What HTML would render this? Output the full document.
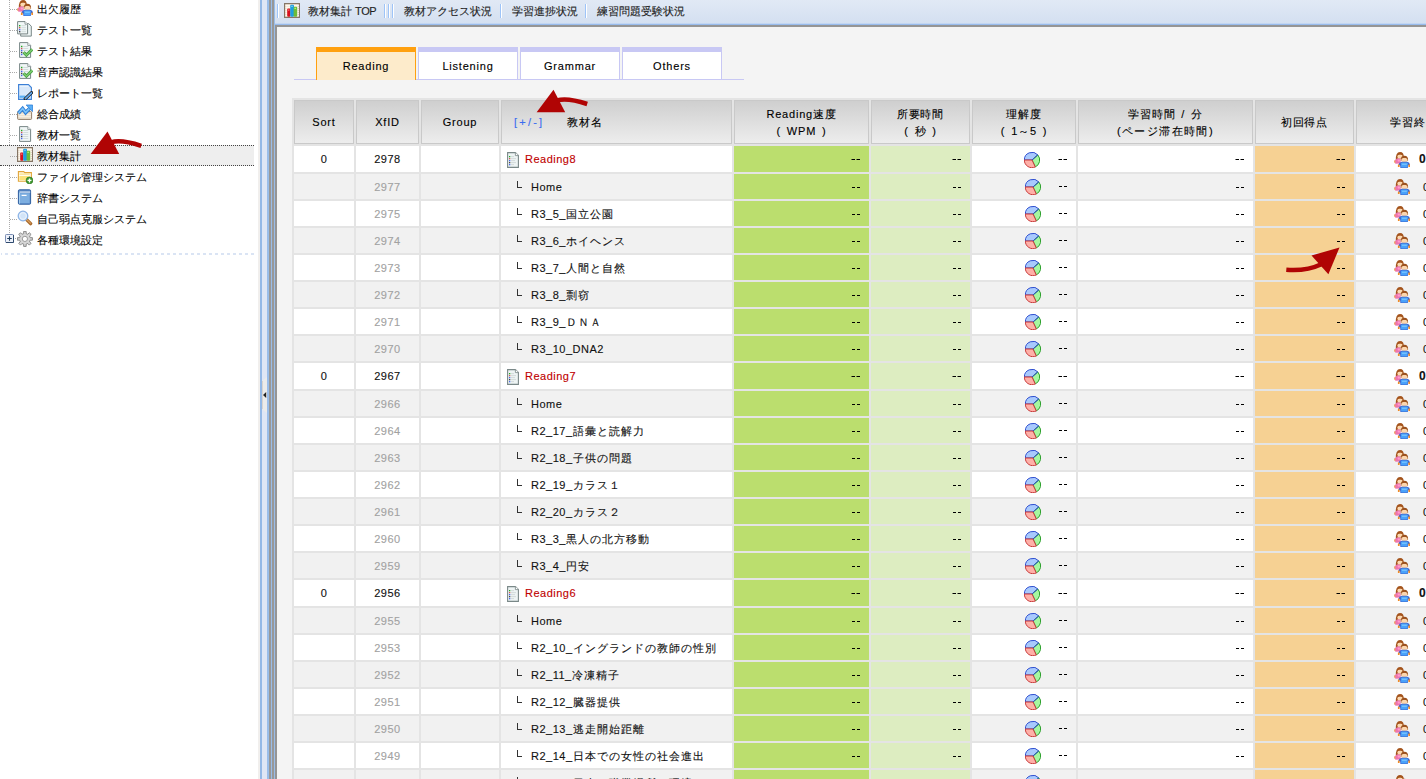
<!DOCTYPE html>
<html><head><meta charset="utf-8">
<style>
html,body{margin:0;padding:0}
body{width:1426px;height:779px;overflow:hidden;position:relative;background:#fff;font-family:"Liberation Sans",sans-serif;font-size:12px;color:#111;-webkit-text-stroke:0.12px}
svg{display:block}
.abs{position:absolute}
.c{position:absolute}
.t{position:absolute;height:14px;line-height:14px;white-space:nowrap;color:#111;font-size:11px;letter-spacing:.5px}
.t.gr{color:#a2a2a2}
.t.red{color:#c00000}
.j{letter-spacing:1px}
.d{position:absolute;width:3px;height:1px;background:#000}
.t.b{font-weight:bold;font-size:12px;letter-spacing:0}
.ell{position:absolute;width:4px;height:6px;border-left:1px solid #333;border-bottom:1px solid #333}
.i{position:absolute;width:16px;height:16px;line-height:0}
.hdot{position:absolute;left:10px;width:7px;height:1px;background:repeating-linear-gradient(90deg,#aaa 0 1px,transparent 1px 2px)}
.st{position:absolute;left:37px;height:16px;line-height:16px;font-size:11px;white-space:nowrap;color:#000}
.sel{position:absolute;left:0;width:254px;height:19px;border-top:1px dotted #444;border-bottom:1px dotted #444;background:#eee}
.hc{position:absolute;top:100px;height:42px;border:1px solid #c9c9c9;background:linear-gradient(#cfcfcf,#ededed);text-align:center;color:#000;font-size:11px;letter-spacing:.8px}
.hc span{display:block;line-height:17px}
.tab{position:absolute;top:47px;width:98px;height:27px;border:1px solid #c8c8f4;border-top:5px solid #c8c8f4;background:#fff;text-align:center;line-height:28px;font-size:11px;color:#000;letter-spacing:.8px}
.tab.on{border-color:#ffa00f;border-bottom:none;height:28px;background:#fdebcb}
.sep{position:absolute;top:4px;width:1px;height:14px;background:#9ec4f8;border-right:1px solid #fff}
</style></head><body>
<!-- sidebar -->
<div class="abs" style="left:9px;top:0;width:1px;height:233px;background:repeating-linear-gradient(180deg,#aaa 0 1px,transparent 1px 2px)"></div>
<div class="hdot" style="top:9px"></div>
<div class="i" style="left:17px;top:0px"><svg width="16" height="16" viewBox="0 0 16 16"><path d="M1.8 8.6 Q1.4 0 6 0 Q10.2 0 9.8 5.6 L8.6 6.4 L3.6 6.6 L3.4 8.8 Z" fill="#a4541c"/><ellipse cx="6.1" cy="4.5" rx="2.7" ry="2.1" fill="#fcd9b0"/><path d="M3.4 3.2 Q6 1.2 8.8 3.4 Q8.6 1.2 6 1.1 Q3.6 1.2 3.4 3.2Z" fill="#a4541c"/><path d="M0.4 8.8 L3 6.5 L6.4 6.6 L6.8 11.6 L1.4 11.8 Z" fill="#ee74b0"/><path d="M3.6 7.4 L5.8 7.4 L6 9.6 L3.8 9.4Z" fill="#ff9ccc"/><path d="M0 8.6 L1.4 8.4 L1.6 10.8 L0.2 10.8Z" fill="#eea060"/><path d="M6.7 8.8 Q6.4 3.8 10.4 3.8 Q14.4 3.8 14.1 8.8 Z" fill="#9c521e"/><ellipse cx="10.4" cy="8.1" rx="3.1" ry="2.4" fill="#fcd6ad"/><path d="M7.3 6.8 Q10.4 4.6 13.5 6.8 Q13 4.6 10.4 4.5 Q7.8 4.6 7.3 6.8Z" fill="#9c521e"/><path d="M4.3 13 L5.6 10.8 L7.6 9.8 L13.2 9.8 L15.2 10.8 L16 13 L14 13.4 L13.8 16 L6.4 16 L6.2 13.4 Z" fill="#3c64cc"/><path d="M6.8 11 L8.2 10.4 L12.6 10.4 L14 11 L13.4 15.4 L7.2 15.4 Z" fill="#4aa2fa"/><path d="M8 11.6 H12.8 V13 H8Z" fill="#7cc8ff" opacity=".8"/><path d="M3.9 12.6 H5.6 V15 H3.9Z" fill="#f08a24"/><path d="M14.4 12.6 H16 V15 H14.4Z" fill="#f08a24"/></svg></div>
<div class="st" style="top:1px">出欠履歴</div>
<div class="hdot" style="top:30px"></div>
<div class="i" style="left:17px;top:21px"><svg width="16" height="16" viewBox="0 0 16 16"><path d="M3.7 2.6 H11.700000000000001 L14.3 5.2 V15.1 H3.7 Z" fill="#eef5f5" stroke="#788686" stroke-width="1"/><path d="M0.6 0.6 H8.0 L10.6 3.2 V12.9 H0.6 Z" fill="#f2f8f8" stroke="#788686" stroke-width="1"/><path d="M8 0.6 V3.2 H10.6" fill="#fff" stroke="#788686" stroke-width="0.8"/><rect x="2" y="4" width="1.4" height="1.4" fill="#2a2"/><rect x="4.4" y="4.2" width="4.5" height="1" fill="#d2dcdc"/><rect x="2" y="6" width="1.4" height="1.4" fill="#c55"/><rect x="4.4" y="6.2" width="4.5" height="1" fill="#d2dcdc"/><rect x="2" y="8" width="1.4" height="1.4" fill="#46e"/><rect x="4.4" y="8.2" width="4.5" height="1" fill="#d2dcdc"/><rect x="2" y="10" width="1.4" height="1.4" fill="#444"/><rect x="4.4" y="10.2" width="4.5" height="1" fill="#d2dcdc"/></svg></div>
<div class="st" style="top:22px">テスト一覧</div>
<div class="hdot" style="top:51px"></div>
<div class="i" style="left:17px;top:42px"><svg width="16" height="16" viewBox="0 0 16 16"><path d="M2.6 0.6 H10.8 L13.6 3.4 V15.4 H2.6 Z" fill="#f0f6f6" stroke="#788686" stroke-width="1"/><path d="M10.8 0.6 V3.4 H13.6" fill="#fff" stroke="#788686" stroke-width="0.8"/><rect x="4" y="3.8" width="1.4" height="1.4" fill="#2a2"/><rect x="6.2" y="4.0" width="5" height="1" fill="#d2dcdc"/><rect x="4" y="5.8" width="1.4" height="1.4" fill="#c55"/><rect x="6.2" y="6.0" width="5" height="1" fill="#d2dcdc"/><rect x="4" y="7.8" width="1.4" height="1.4" fill="#46e"/><rect x="6.2" y="8.0" width="5" height="1" fill="#d2dcdc"/><rect x="4" y="9.8" width="1.4" height="1.4" fill="#444"/><rect x="6.2" y="10.0" width="5" height="1" fill="#d2dcdc"/><rect x="4" y="11.8" width="1.4" height="1.4" fill="#46e"/><rect x="6.2" y="12.0" width="5" height="1" fill="#d2dcdc"/><path d="M6.6 10.2 L9.4 13.2 L15.2 7.4" fill="none" stroke="#3f9a3f" stroke-width="3" stroke-linejoin="miter"/><path d="M6.6 10.2 L9.4 13.2 L15.2 7.4" fill="none" stroke="#7ccc6c" stroke-width="1.6"/></svg></div>
<div class="st" style="top:43px">テスト結果</div>
<div class="hdot" style="top:72px"></div>
<div class="i" style="left:17px;top:63px"><svg width="16" height="16" viewBox="0 0 16 16"><path d="M2.6 0.6 H10.8 L13.6 3.4 V15.4 H2.6 Z" fill="#f0f6f6" stroke="#788686" stroke-width="1"/><path d="M10.8 0.6 V3.4 H13.6" fill="#fff" stroke="#788686" stroke-width="0.8"/><rect x="4" y="3.8" width="1.4" height="1.4" fill="#2a2"/><rect x="6.2" y="4.0" width="5" height="1" fill="#d2dcdc"/><rect x="4" y="5.8" width="1.4" height="1.4" fill="#c55"/><rect x="6.2" y="6.0" width="5" height="1" fill="#d2dcdc"/><rect x="4" y="7.8" width="1.4" height="1.4" fill="#46e"/><rect x="6.2" y="8.0" width="5" height="1" fill="#d2dcdc"/><rect x="4" y="9.8" width="1.4" height="1.4" fill="#444"/><rect x="6.2" y="10.0" width="5" height="1" fill="#d2dcdc"/><rect x="4" y="11.8" width="1.4" height="1.4" fill="#46e"/><rect x="6.2" y="12.0" width="5" height="1" fill="#d2dcdc"/><path d="M6.6 10.2 L9.4 13.2 L15.2 7.4" fill="none" stroke="#3f9a3f" stroke-width="3" stroke-linejoin="miter"/><path d="M6.6 10.2 L9.4 13.2 L15.2 7.4" fill="none" stroke="#7ccc6c" stroke-width="1.6"/></svg></div>
<div class="st" style="top:64px">音声認識結果</div>
<div class="hdot" style="top:93px"></div>
<div class="i" style="left:17px;top:84px"><svg width="16" height="16" viewBox="0 0 16 16"><path d="M1.6 0.6 H11.4 L14.4 3.6 V15.4 H1.6 Z" fill="#d8e8fa" stroke="#3b7fd6" stroke-width="1.1"/><rect x="2.6" y="1.6" width="9" height="1" fill="#fff" opacity=".7"/><rect x="2.4" y="11.6" width="6" height="2.2" fill="#58aef5"/><path d="M8.2 14.8 L14.6 8.6" stroke="#222" stroke-width="3.2" stroke-linecap="round"/><path d="M8.4 14.6 L14.4 8.8" stroke="#60a8f0" stroke-width="1.6" stroke-linecap="round"/></svg></div>
<div class="st" style="top:85px">レポート一覧</div>
<div class="hdot" style="top:114px"></div>
<div class="i" style="left:17px;top:104px"><svg width="16" height="16" viewBox="0 0 16 16"><rect x="0.6" y="7.6" width="14" height="7.8" rx="0.8" fill="#ede2cf" stroke="#907c68" stroke-width="1"/><path d="M1.5 10.5H14M1.5 12.5H14" stroke="#f8f2e8" stroke-width="0.8"/><path d="M1.4 9.2 L5.6 4.6 L8.6 8.6 L12.6 4.4" fill="none" stroke="#2e7fd8" stroke-width="3.6" stroke-linejoin="miter"/><path d="M1.6 9 L5.6 4.6 L8.6 8.6 L12.6 4.4" fill="none" stroke="#7cc4fa" stroke-width="1.6"/><path d="M9.2 1 H15.6 V7.6 Z" fill="#5ab0f6" stroke="#2e7fd8" stroke-width="0.8"/></svg></div>
<div class="st" style="top:106px">総合成績</div>
<div class="hdot" style="top:135px"></div>
<div class="i" style="left:17px;top:126px"><svg width="16" height="16" viewBox="0 0 16 16"><path d="M2.6 0.6 H10.8 L13.6 3.4 V15.4 H2.6 Z" fill="#f0f6f6" stroke="#788686" stroke-width="1"/><path d="M10.8 0.6 V3.4 H13.6" fill="#fff" stroke="#788686" stroke-width="0.8"/><rect x="4" y="3.8" width="1.4" height="1.4" fill="#2a2"/><rect x="6.2" y="4.0" width="5" height="1" fill="#d2dcdc"/><rect x="4" y="5.8" width="1.4" height="1.4" fill="#c55"/><rect x="6.2" y="6.0" width="5" height="1" fill="#d2dcdc"/><rect x="4" y="7.8" width="1.4" height="1.4" fill="#46e"/><rect x="6.2" y="8.0" width="5" height="1" fill="#d2dcdc"/><rect x="4" y="9.8" width="1.4" height="1.4" fill="#444"/><rect x="6.2" y="10.0" width="5" height="1" fill="#d2dcdc"/><rect x="4" y="11.8" width="1.4" height="1.4" fill="#46e"/><rect x="6.2" y="12.0" width="5" height="1" fill="#d2dcdc"/></svg></div>
<div class="st" style="top:127px">教材一覧</div>
<div class="sel" style="top:145px"></div>
<div class="hdot" style="top:156px"></div>
<div class="i" style="left:17px;top:147px"><svg width="16" height="16" viewBox="0 0 16 16"><rect x="0.6" y="0.6" width="14.8" height="13.8" fill="#f6ecda" stroke="#857666" stroke-width="1.2"/><path d="M1.5 2.5H15M1.5 4.5H15M1.5 6.5H15M1.5 8.5H15M1.5 10.5H15M1.5 12.5H15" stroke="#fffaf2" stroke-width="0.8"/><rect x="3.2" y="5.6" width="3.2" height="8.2" rx="1" fill="#d8101e"/><rect x="6.2" y="1.8" width="3.8" height="12" rx="1" fill="#1e9ee0"/><rect x="9.6" y="3.8" width="3.6" height="10" rx="1" fill="#6cbc3a"/><rect x="4" y="6.6" width="1.4" height="1" fill="#f88"/><rect x="7.2" y="2.8" width="1.6" height="1" fill="#8de"/><rect x="10.4" y="4.8" width="1.6" height="1" fill="#bf8"/></svg></div>
<div class="st" style="top:148px">教材集計</div>
<div class="hdot" style="top:177px"></div>
<div class="i" style="left:17px;top:168px"><svg width="16" height="16" viewBox="0 0 16 16"><path d="M1.4 3.6 H6.8 L7.6 4.6 H14.4 V13.2 H1.4 Z" fill="#fffbea" stroke="#e2a63a" stroke-width="1.1"/><path d="M2.4 5.6 H12.8 V6.6 H2.4 Z" fill="#f8d870"/><path d="M2.4 8 H12.6 V12.2 H2.4 Z" fill="#fbe27a"/><circle cx="12.5" cy="12.4" r="3.4" fill="#3e9a2e" stroke="#2a6e1e" stroke-width="0.6"/><path d="M12.5 10.4 V14.4 M10.5 12.4 H14.5" stroke="#fff" stroke-width="1.4"/></svg></div>
<div class="st" style="top:169px">ファイル管理システム</div>
<div class="hdot" style="top:198px"></div>
<div class="i" style="left:17px;top:189px"><svg width="16" height="16" viewBox="0 0 16 16"><rect x="1.4" y="0.8" width="12.2" height="14.4" rx="1" fill="#5e8fcc" stroke="#2f5fa0" stroke-width="1"/><rect x="2.6" y="2.6" width="10.6" height="0.9" fill="#fff"/><rect x="3" y="4.2" width="9.6" height="10" fill="#7daee0"/><rect x="4.6" y="5.8" width="5" height="1.2" fill="#fff"/><rect x="2" y="3.6" width="1" height="11" fill="#a8d0f0"/></svg></div>
<div class="st" style="top:190px">辞書システム</div>
<div class="hdot" style="top:219px"></div>
<div class="i" style="left:17px;top:210px"><svg width="16" height="16" viewBox="0 0 16 16"><path d="M9.6 9.6 L13.6 13.6" stroke="#a86a2c" stroke-width="3.4" stroke-linecap="round"/><path d="M9.8 9.6 L13.4 13.2" stroke="#dca060" stroke-width="1.2" stroke-linecap="round"/><circle cx="6" cy="6" r="4.8" fill="#d2e4f8" stroke="#8db4e6" stroke-width="1.3"/><circle cx="6" cy="6" r="3.4" fill="none" stroke="#eef5fd" stroke-width="0.9"/></svg></div>
<div class="st" style="top:211px">自己弱点克服システム</div>
<div class="abs" style="left:15px;top:238px;width:1px;height:1px;background:#aaa"></div>
<div class="i" style="left:5px;top:234px;width:9px;height:9px"><svg width="9" height="9" viewBox="0 0 9 9"><rect x="0.5" y="0.5" width="8" height="8" rx="0.8" fill="#eef2fb" stroke="#7c8fb4" stroke-width="1"/><path d="M8.5 1 V8.5 H1" fill="none" stroke="#2f4a6e" stroke-width="1"/><path d="M4.5 2.2 V6.8 M2.2 4.5 H6.8" stroke="#23405e" stroke-width="1.1"/></svg></div>
<div class="i" style="left:17px;top:231px"><svg width="16" height="16" viewBox="0 0 16 16"><path d="M13.17 6.72 L15.39 6.61 L15.39 9.19 L13.17 9.08 L12.89 9.97 L12.46 10.79 L14.11 12.29 L12.29 14.11 L10.79 12.46 L9.97 12.89 L9.08 13.17 L9.19 15.39 L6.61 15.39 L6.72 13.17 L5.83 12.89 L5.01 12.46 L3.51 14.11 L1.69 12.29 L3.34 10.79 L2.91 9.97 L2.63 9.08 L0.41 9.19 L0.41 6.61 L2.63 6.72 L2.91 5.83 L3.34 5.01 L1.69 3.51 L3.51 1.69 L5.01 3.34 L5.83 2.91 L6.72 2.63 L6.61 0.41 L9.19 0.41 L9.08 2.63 L9.97 2.91 L10.79 3.34 L12.29 1.69 L14.11 3.51 L12.46 5.01 L12.89 5.83Z" fill="#d6d6d6" stroke="#8a8a8a" stroke-width="1"/><circle cx="7.9" cy="7.9" r="2.6" fill="#fff" stroke="#9a9a9a" stroke-width="1"/></svg></div>
<div class="st" style="top:232px">各種環境設定</div>
<div class="abs" style="left:1px;top:253px;width:253px;height:2px;background:linear-gradient(90deg,#dae4f4 50%,transparent 50%) 4px 0/6px 2px repeat-x"></div>
<!-- splitter -->
<div class="abs" style="left:258px;top:0;width:2px;height:779px;background:#f1efed"></div>
<div class="abs" style="left:260px;top:0;width:2px;height:779px;background:#94b8e6"></div>
<div class="abs" style="left:262px;top:0;width:5px;height:779px;background:#dfe6f5"></div>
<div class="abs" style="left:267px;top:0;width:2px;height:779px;background:#9abde9"></div>
<div class="abs" style="left:269px;top:0;width:2px;height:779px;background:#989898"></div>
<div class="abs" style="left:271px;top:0;width:1px;height:779px;background:#9abde9"></div>
<div class="abs" style="left:272px;top:0;width:2px;height:779px;background:#989898"></div>
<div class="abs" style="left:274px;top:0;width:1px;height:779px;background:#9abde9"></div>
<svg class="abs" style="left:262px;top:377px" width="5" height="36" viewBox="0 0 5 36"><path d="M0 4 L5 0 V36 L0 32 Z" fill="#ebebeb"/><path d="M0.5 4 V32" stroke="#d8d4d0" stroke-width="1"/><path d="M1 18 L4.2 15 V21 Z" fill="#222"/></svg>
<!-- toolbar -->
<div class="abs" style="left:275px;top:0;width:1151px;height:23px;background:linear-gradient(#e1e9f5,#d4e0f1)"></div>
<div class="abs" style="left:275px;top:23px;width:1151px;height:1px;background:#c2d6f2"></div><div class="abs" style="left:275px;top:24px;width:1151px;height:1px;background:#98bbec"></div>
<div class="abs" style="left:275px;top:25px;width:1151px;height:2px;background:#959595"></div>
<div class="abs" style="left:275px;top:27px;width:2px;height:752px;background:#959595"></div>
<div class="abs" style="left:277px;top:27px;width:1149px;height:752px;background:#f4f4f4"></div>
<div class="sep" style="left:277px"></div>
<div class="i" style="left:284px;top:3px"><svg width="16" height="16" viewBox="0 0 16 16"><rect x="0.6" y="0.6" width="14.8" height="13.8" fill="#f6ecda" stroke="#857666" stroke-width="1.2"/><path d="M1.5 2.5H15M1.5 4.5H15M1.5 6.5H15M1.5 8.5H15M1.5 10.5H15M1.5 12.5H15" stroke="#fffaf2" stroke-width="0.8"/><rect x="3.2" y="5.6" width="3.2" height="8.2" rx="1" fill="#d8101e"/><rect x="6.2" y="1.8" width="3.8" height="12" rx="1" fill="#1e9ee0"/><rect x="9.6" y="3.8" width="3.6" height="10" rx="1" fill="#6cbc3a"/><rect x="4" y="6.6" width="1.4" height="1" fill="#f88"/><rect x="7.2" y="2.8" width="1.6" height="1" fill="#8de"/><rect x="10.4" y="4.8" width="1.6" height="1" fill="#bf8"/></svg></div>
<div style="position:absolute;top:3px;height:16px;line-height:16px;font-size:11px;white-space:nowrap;color:#222;left:308px">教材集計 <span style="letter-spacing:-.4px">TOP</span></div>
<div class="sep" style="left:384px"></div>
<div class="sep" style="left:388px"></div>
<div class="sep" style="left:392px"></div>
<div style="position:absolute;top:3px;height:16px;line-height:16px;font-size:11px;white-space:nowrap;color:#222;left:404px">教材アクセス状況</div>
<div class="sep" style="left:500px"></div>
<div style="position:absolute;top:3px;height:16px;line-height:16px;font-size:11px;white-space:nowrap;color:#222;left:512px">学習進捗状況</div>
<div class="sep" style="left:585px"></div>
<div style="position:absolute;top:3px;height:16px;line-height:16px;font-size:11px;white-space:nowrap;color:#222;left:597px">練習問題受験状況</div>
<!-- tabs -->
<div class="abs" style="left:294px;top:79px;width:450px;height:1px;background:#c8c8f4"></div>
<div class="tab on" style="left:316px">Reading</div>
<div class="tab" style="left:418px">Listening</div>
<div class="tab" style="left:520px">Grammar</div>
<div class="tab" style="left:622px">Others</div>
<!-- table -->
<div class="abs" style="left:292px;top:98px;width:1134px;height:681px;background:#e4e4e4"></div>
<div class="hc" style="left:294px;width:58px;line-height:42px">Sort</div>
<div class="hc" style="left:356px;width:61px;line-height:42px">XfID</div>
<div class="hc" style="left:421px;width:76px;line-height:42px">Group</div>
<div class="hc" style="left:501px;width:229px;line-height:42px;text-align:left"><span style="display:inline;color:#3a6cf0;margin-left:12px;letter-spacing:2.2px">[+/-]</span><span style="display:inline;margin-left:23px">教材名</span></div>
<div class="hc" style="left:734px;width:133px"><span style="margin-top:5px">Reading速度</span><span style="word-spacing:2px">( WPM )</span></div>
<div class="hc" style="left:871px;width:97px"><span style="margin-top:5px">所要時間</span><span style="word-spacing:2px">( 秒 )</span></div>
<div class="hc" style="left:972px;width:102px"><span style="margin-top:5px">理解度</span><span style="word-spacing:2px">( 1～5 )</span></div>
<div class="hc" style="left:1078px;width:173px"><span style="margin-top:5px;word-spacing:2px">学習時間 / 分</span><span style="letter-spacing:1.4px">(ページ滞在時間)</span></div>
<div class="hc" style="left:1255px;width:97px;line-height:42px">初回得点</div>
<div class="hc" style="left:1356px;width:114px;line-height:42px">学習終了</div>
<div class="c" style="left:294px;top:146px;width:60px;height:26px;background:#fff"></div>
<div class="c" style="left:356px;top:146px;width:63px;height:26px;background:#fff"></div>
<div class="c" style="left:421px;top:146px;width:78px;height:26px;background:#fff"></div>
<div class="c" style="left:501px;top:146px;width:231px;height:26px;background:#fff"></div>
<div class="c" style="left:734px;top:146px;width:135px;height:26px;background:#bbde6e"></div>
<div class="c" style="left:871px;top:146px;width:99px;height:26px;background:#ddedc1"></div>
<div class="c" style="left:972px;top:146px;width:104px;height:26px;background:#fff"></div>
<div class="c" style="left:1078px;top:146px;width:175px;height:26px;background:#fff"></div>
<div class="c" style="left:1255px;top:146px;width:99px;height:26px;background:#f6d193"></div>
<div class="c" style="left:1356px;top:146px;width:120px;height:26px;background:#fff"></div>
<div class="t " style="left:294px;top:152px;width:60px;text-align:center">0</div>
<div class="t " style="left:356px;top:152px;width:63px;text-align:center">2978</div>
<div class="i" style="left:507px;top:152px;width:12px"><svg width="12" height="16" viewBox="0 0 12 16"><path d="M0.6 0.6 H8.4 L11.4 3.6 V15.4 H0.6 Z" fill="#eef4f4" stroke="#7a8888" stroke-width="1.1"/><path d="M8.4 0.6 V3.6 H11.4" fill="#fff" stroke="#7a8888" stroke-width="0.8"/><rect x="2" y="4" width="1.3" height="1.3" fill="#2a2"/><rect x="2" y="6" width="1.3" height="1.3" fill="#c55"/><rect x="2" y="8" width="1.3" height="1.3" fill="#46e"/><rect x="2" y="10" width="1.3" height="1.3" fill="#444"/><rect x="2" y="12" width="1.3" height="1.3" fill="#46e"/><path d="M4 4.6H7M4 6.6H9M4 8.6H8M4 10.6H9M4 12.6H7" stroke="#d0d8d8" stroke-width="0.9"/></svg></div>
<div class="t red" style="left:525px;top:152px">Reading8</div>
<div class="d" style="left:852px;top:159px"></div><div class="d" style="left:851px;top:159px;width:1px;opacity:.5"></div><div class="d" style="left:857px;top:159px"></div><div class="d" style="left:856px;top:159px;width:1px;opacity:.5"></div>
<div class="d" style="left:953px;top:159px"></div><div class="d" style="left:952px;top:159px;width:1px;opacity:.5"></div><div class="d" style="left:958px;top:159px"></div><div class="d" style="left:957px;top:159px;width:1px;opacity:.5"></div>
<div class="i" style="left:1024px;top:152px"><svg width="16" height="16" viewBox="0 0 16 16"><path d="M8 8 L0.3 8 A7.7 7.7 0 0 1 13.83 2.97 Z" fill="#a8c9fd" stroke="#2f4fd0" stroke-width="1"/><path d="M8 8 L13.83 2.97 A7.7 7.7 0 0 1 11.31 14.95 Z" fill="#a6f7a0" stroke="#2ea02e" stroke-width="1"/><path d="M8 8 L11.31 14.95 A7.7 7.7 0 0 1 0.3 8 Z" fill="#feb0a8" stroke="#c83a3a" stroke-width="1"/><path d="M8 8 L13.83 2.97" stroke="#2f4fd0" stroke-width="1"/></svg></div>
<div class="d" style="left:1059px;top:159px"></div><div class="d" style="left:1058px;top:159px;width:1px;opacity:.5"></div><div class="d" style="left:1064px;top:159px"></div><div class="d" style="left:1063px;top:159px;width:1px;opacity:.5"></div>
<div class="d" style="left:1236px;top:159px"></div><div class="d" style="left:1235px;top:159px;width:1px;opacity:.5"></div><div class="d" style="left:1241px;top:159px"></div><div class="d" style="left:1240px;top:159px;width:1px;opacity:.5"></div>
<div class="d" style="left:1337px;top:159px"></div><div class="d" style="left:1336px;top:159px;width:1px;opacity:.5"></div><div class="d" style="left:1342px;top:159px"></div><div class="d" style="left:1341px;top:159px;width:1px;opacity:.5"></div>
<div class="i" style="left:1394px;top:152px"><svg width="16" height="16" viewBox="0 0 16 16"><path d="M1.8 8.6 Q1.4 0 6 0 Q10.2 0 9.8 5.6 L8.6 6.4 L3.6 6.6 L3.4 8.8 Z" fill="#a4541c"/><ellipse cx="6.1" cy="4.5" rx="2.7" ry="2.1" fill="#fcd9b0"/><path d="M3.4 3.2 Q6 1.2 8.8 3.4 Q8.6 1.2 6 1.1 Q3.6 1.2 3.4 3.2Z" fill="#a4541c"/><path d="M0.4 8.8 L3 6.5 L6.4 6.6 L6.8 11.6 L1.4 11.8 Z" fill="#ee74b0"/><path d="M3.6 7.4 L5.8 7.4 L6 9.6 L3.8 9.4Z" fill="#ff9ccc"/><path d="M0 8.6 L1.4 8.4 L1.6 10.8 L0.2 10.8Z" fill="#eea060"/><path d="M6.7 8.8 Q6.4 3.8 10.4 3.8 Q14.4 3.8 14.1 8.8 Z" fill="#9c521e"/><ellipse cx="10.4" cy="8.1" rx="3.1" ry="2.4" fill="#fcd6ad"/><path d="M7.3 6.8 Q10.4 4.6 13.5 6.8 Q13 4.6 10.4 4.5 Q7.8 4.6 7.3 6.8Z" fill="#9c521e"/><path d="M4.3 13 L5.6 10.8 L7.6 9.8 L13.2 9.8 L15.2 10.8 L16 13 L14 13.4 L13.8 16 L6.4 16 L6.2 13.4 Z" fill="#3c64cc"/><path d="M6.8 11 L8.2 10.4 L12.6 10.4 L14 11 L13.4 15.4 L7.2 15.4 Z" fill="#4aa2fa"/><path d="M8 11.6 H12.8 V13 H8Z" fill="#7cc8ff" opacity=".8"/><path d="M3.9 12.6 H5.6 V15 H3.9Z" fill="#f08a24"/><path d="M14.4 12.6 H16 V15 H14.4Z" fill="#f08a24"/></svg></div>
<div class="t b" style="left:1419px;top:152px">0</div>
<div class="c" style="left:294px;top:174px;width:60px;height:25px;background:#f1f1f1"></div>
<div class="c" style="left:356px;top:174px;width:63px;height:25px;background:#f1f1f1"></div>
<div class="c" style="left:421px;top:174px;width:78px;height:25px;background:#f1f1f1"></div>
<div class="c" style="left:501px;top:174px;width:231px;height:25px;background:#f1f1f1"></div>
<div class="c" style="left:734px;top:174px;width:135px;height:25px;background:#bbde6e"></div>
<div class="c" style="left:871px;top:174px;width:99px;height:25px;background:#ddedc1"></div>
<div class="c" style="left:972px;top:174px;width:104px;height:25px;background:#f1f1f1"></div>
<div class="c" style="left:1078px;top:174px;width:175px;height:25px;background:#f1f1f1"></div>
<div class="c" style="left:1255px;top:174px;width:99px;height:25px;background:#f6d193"></div>
<div class="c" style="left:1356px;top:174px;width:120px;height:25px;background:#f1f1f1"></div>
<div class="t " style="left:294px;top:180px;width:60px;text-align:center"></div>
<div class="t gr" style="left:356px;top:180px;width:63px;text-align:center">2977</div>
<div class="ell" style="left:517px;top:181px"></div>
<div class="t " style="left:531px;top:180px">Home</div>
<div class="d" style="left:852px;top:187px"></div><div class="d" style="left:857px;top:187px"></div>
<div class="d" style="left:953px;top:187px"></div><div class="d" style="left:958px;top:187px"></div>
<div class="i" style="left:1025px;top:179px"><svg width="16" height="16" viewBox="0 0 16 16"><path d="M8 8 L0.3 8 A7.7 7.7 0 0 1 13.83 2.97 Z" fill="#a8c9fd" stroke="#2f4fd0" stroke-width="1"/><path d="M8 8 L13.83 2.97 A7.7 7.7 0 0 1 11.31 14.95 Z" fill="#a6f7a0" stroke="#2ea02e" stroke-width="1"/><path d="M8 8 L11.31 14.95 A7.7 7.7 0 0 1 0.3 8 Z" fill="#feb0a8" stroke="#c83a3a" stroke-width="1"/><path d="M8 8 L13.83 2.97" stroke="#2f4fd0" stroke-width="1"/></svg></div>
<div class="d" style="left:1059px;top:186px"></div><div class="d" style="left:1064px;top:186px"></div>
<div class="d" style="left:1236px;top:187px"></div><div class="d" style="left:1241px;top:187px"></div>
<div class="d" style="left:1337px;top:187px"></div><div class="d" style="left:1342px;top:187px"></div>
<div class="i" style="left:1394px;top:179px"><svg width="16" height="16" viewBox="0 0 16 16"><path d="M1.8 8.6 Q1.4 0 6 0 Q10.2 0 9.8 5.6 L8.6 6.4 L3.6 6.6 L3.4 8.8 Z" fill="#a4541c"/><ellipse cx="6.1" cy="4.5" rx="2.7" ry="2.1" fill="#fcd9b0"/><path d="M3.4 3.2 Q6 1.2 8.8 3.4 Q8.6 1.2 6 1.1 Q3.6 1.2 3.4 3.2Z" fill="#a4541c"/><path d="M0.4 8.8 L3 6.5 L6.4 6.6 L6.8 11.6 L1.4 11.8 Z" fill="#ee74b0"/><path d="M3.6 7.4 L5.8 7.4 L6 9.6 L3.8 9.4Z" fill="#ff9ccc"/><path d="M0 8.6 L1.4 8.4 L1.6 10.8 L0.2 10.8Z" fill="#eea060"/><path d="M6.7 8.8 Q6.4 3.8 10.4 3.8 Q14.4 3.8 14.1 8.8 Z" fill="#9c521e"/><ellipse cx="10.4" cy="8.1" rx="3.1" ry="2.4" fill="#fcd6ad"/><path d="M7.3 6.8 Q10.4 4.6 13.5 6.8 Q13 4.6 10.4 4.5 Q7.8 4.6 7.3 6.8Z" fill="#9c521e"/><path d="M4.3 13 L5.6 10.8 L7.6 9.8 L13.2 9.8 L15.2 10.8 L16 13 L14 13.4 L13.8 16 L6.4 16 L6.2 13.4 Z" fill="#3c64cc"/><path d="M6.8 11 L8.2 10.4 L12.6 10.4 L14 11 L13.4 15.4 L7.2 15.4 Z" fill="#4aa2fa"/><path d="M8 11.6 H12.8 V13 H8Z" fill="#7cc8ff" opacity=".8"/><path d="M3.9 12.6 H5.6 V15 H3.9Z" fill="#f08a24"/><path d="M14.4 12.6 H16 V15 H14.4Z" fill="#f08a24"/></svg></div>
<div class="t " style="left:1423px;top:180px">0</div>
<div class="c" style="left:294px;top:201px;width:60px;height:25px;background:#fff"></div>
<div class="c" style="left:356px;top:201px;width:63px;height:25px;background:#fff"></div>
<div class="c" style="left:421px;top:201px;width:78px;height:25px;background:#fff"></div>
<div class="c" style="left:501px;top:201px;width:231px;height:25px;background:#fff"></div>
<div class="c" style="left:734px;top:201px;width:135px;height:25px;background:#bbde6e"></div>
<div class="c" style="left:871px;top:201px;width:99px;height:25px;background:#ddedc1"></div>
<div class="c" style="left:972px;top:201px;width:104px;height:25px;background:#fff"></div>
<div class="c" style="left:1078px;top:201px;width:175px;height:25px;background:#fff"></div>
<div class="c" style="left:1255px;top:201px;width:99px;height:25px;background:#f6d193"></div>
<div class="c" style="left:1356px;top:201px;width:120px;height:25px;background:#fff"></div>
<div class="t " style="left:294px;top:207px;width:60px;text-align:center"></div>
<div class="t gr" style="left:356px;top:207px;width:63px;text-align:center">2975</div>
<div class="ell" style="left:517px;top:208px"></div>
<div class="t " style="left:531px;top:207px">R3_5_<span class="j">国立公園</span></div>
<div class="d" style="left:852px;top:214px"></div><div class="d" style="left:857px;top:214px"></div>
<div class="d" style="left:953px;top:214px"></div><div class="d" style="left:958px;top:214px"></div>
<div class="i" style="left:1025px;top:206px"><svg width="16" height="16" viewBox="0 0 16 16"><path d="M8 8 L0.3 8 A7.7 7.7 0 0 1 13.83 2.97 Z" fill="#a8c9fd" stroke="#2f4fd0" stroke-width="1"/><path d="M8 8 L13.83 2.97 A7.7 7.7 0 0 1 11.31 14.95 Z" fill="#a6f7a0" stroke="#2ea02e" stroke-width="1"/><path d="M8 8 L11.31 14.95 A7.7 7.7 0 0 1 0.3 8 Z" fill="#feb0a8" stroke="#c83a3a" stroke-width="1"/><path d="M8 8 L13.83 2.97" stroke="#2f4fd0" stroke-width="1"/></svg></div>
<div class="d" style="left:1059px;top:213px"></div><div class="d" style="left:1064px;top:213px"></div>
<div class="d" style="left:1236px;top:214px"></div><div class="d" style="left:1241px;top:214px"></div>
<div class="d" style="left:1337px;top:214px"></div><div class="d" style="left:1342px;top:214px"></div>
<div class="i" style="left:1394px;top:206px"><svg width="16" height="16" viewBox="0 0 16 16"><path d="M1.8 8.6 Q1.4 0 6 0 Q10.2 0 9.8 5.6 L8.6 6.4 L3.6 6.6 L3.4 8.8 Z" fill="#a4541c"/><ellipse cx="6.1" cy="4.5" rx="2.7" ry="2.1" fill="#fcd9b0"/><path d="M3.4 3.2 Q6 1.2 8.8 3.4 Q8.6 1.2 6 1.1 Q3.6 1.2 3.4 3.2Z" fill="#a4541c"/><path d="M0.4 8.8 L3 6.5 L6.4 6.6 L6.8 11.6 L1.4 11.8 Z" fill="#ee74b0"/><path d="M3.6 7.4 L5.8 7.4 L6 9.6 L3.8 9.4Z" fill="#ff9ccc"/><path d="M0 8.6 L1.4 8.4 L1.6 10.8 L0.2 10.8Z" fill="#eea060"/><path d="M6.7 8.8 Q6.4 3.8 10.4 3.8 Q14.4 3.8 14.1 8.8 Z" fill="#9c521e"/><ellipse cx="10.4" cy="8.1" rx="3.1" ry="2.4" fill="#fcd6ad"/><path d="M7.3 6.8 Q10.4 4.6 13.5 6.8 Q13 4.6 10.4 4.5 Q7.8 4.6 7.3 6.8Z" fill="#9c521e"/><path d="M4.3 13 L5.6 10.8 L7.6 9.8 L13.2 9.8 L15.2 10.8 L16 13 L14 13.4 L13.8 16 L6.4 16 L6.2 13.4 Z" fill="#3c64cc"/><path d="M6.8 11 L8.2 10.4 L12.6 10.4 L14 11 L13.4 15.4 L7.2 15.4 Z" fill="#4aa2fa"/><path d="M8 11.6 H12.8 V13 H8Z" fill="#7cc8ff" opacity=".8"/><path d="M3.9 12.6 H5.6 V15 H3.9Z" fill="#f08a24"/><path d="M14.4 12.6 H16 V15 H14.4Z" fill="#f08a24"/></svg></div>
<div class="t " style="left:1423px;top:207px">0</div>
<div class="c" style="left:294px;top:228px;width:60px;height:25px;background:#f1f1f1"></div>
<div class="c" style="left:356px;top:228px;width:63px;height:25px;background:#f1f1f1"></div>
<div class="c" style="left:421px;top:228px;width:78px;height:25px;background:#f1f1f1"></div>
<div class="c" style="left:501px;top:228px;width:231px;height:25px;background:#f1f1f1"></div>
<div class="c" style="left:734px;top:228px;width:135px;height:25px;background:#bbde6e"></div>
<div class="c" style="left:871px;top:228px;width:99px;height:25px;background:#ddedc1"></div>
<div class="c" style="left:972px;top:228px;width:104px;height:25px;background:#f1f1f1"></div>
<div class="c" style="left:1078px;top:228px;width:175px;height:25px;background:#f1f1f1"></div>
<div class="c" style="left:1255px;top:228px;width:99px;height:25px;background:#f6d193"></div>
<div class="c" style="left:1356px;top:228px;width:120px;height:25px;background:#f1f1f1"></div>
<div class="t " style="left:294px;top:234px;width:60px;text-align:center"></div>
<div class="t gr" style="left:356px;top:234px;width:63px;text-align:center">2974</div>
<div class="ell" style="left:517px;top:235px"></div>
<div class="t " style="left:531px;top:234px">R3_6_<span class="j">ホイヘンス</span></div>
<div class="d" style="left:852px;top:241px"></div><div class="d" style="left:857px;top:241px"></div>
<div class="d" style="left:953px;top:241px"></div><div class="d" style="left:958px;top:241px"></div>
<div class="i" style="left:1025px;top:233px"><svg width="16" height="16" viewBox="0 0 16 16"><path d="M8 8 L0.3 8 A7.7 7.7 0 0 1 13.83 2.97 Z" fill="#a8c9fd" stroke="#2f4fd0" stroke-width="1"/><path d="M8 8 L13.83 2.97 A7.7 7.7 0 0 1 11.31 14.95 Z" fill="#a6f7a0" stroke="#2ea02e" stroke-width="1"/><path d="M8 8 L11.31 14.95 A7.7 7.7 0 0 1 0.3 8 Z" fill="#feb0a8" stroke="#c83a3a" stroke-width="1"/><path d="M8 8 L13.83 2.97" stroke="#2f4fd0" stroke-width="1"/></svg></div>
<div class="d" style="left:1059px;top:240px"></div><div class="d" style="left:1064px;top:240px"></div>
<div class="d" style="left:1236px;top:241px"></div><div class="d" style="left:1241px;top:241px"></div>
<div class="d" style="left:1337px;top:241px"></div><div class="d" style="left:1342px;top:241px"></div>
<div class="i" style="left:1394px;top:233px"><svg width="16" height="16" viewBox="0 0 16 16"><path d="M1.8 8.6 Q1.4 0 6 0 Q10.2 0 9.8 5.6 L8.6 6.4 L3.6 6.6 L3.4 8.8 Z" fill="#a4541c"/><ellipse cx="6.1" cy="4.5" rx="2.7" ry="2.1" fill="#fcd9b0"/><path d="M3.4 3.2 Q6 1.2 8.8 3.4 Q8.6 1.2 6 1.1 Q3.6 1.2 3.4 3.2Z" fill="#a4541c"/><path d="M0.4 8.8 L3 6.5 L6.4 6.6 L6.8 11.6 L1.4 11.8 Z" fill="#ee74b0"/><path d="M3.6 7.4 L5.8 7.4 L6 9.6 L3.8 9.4Z" fill="#ff9ccc"/><path d="M0 8.6 L1.4 8.4 L1.6 10.8 L0.2 10.8Z" fill="#eea060"/><path d="M6.7 8.8 Q6.4 3.8 10.4 3.8 Q14.4 3.8 14.1 8.8 Z" fill="#9c521e"/><ellipse cx="10.4" cy="8.1" rx="3.1" ry="2.4" fill="#fcd6ad"/><path d="M7.3 6.8 Q10.4 4.6 13.5 6.8 Q13 4.6 10.4 4.5 Q7.8 4.6 7.3 6.8Z" fill="#9c521e"/><path d="M4.3 13 L5.6 10.8 L7.6 9.8 L13.2 9.8 L15.2 10.8 L16 13 L14 13.4 L13.8 16 L6.4 16 L6.2 13.4 Z" fill="#3c64cc"/><path d="M6.8 11 L8.2 10.4 L12.6 10.4 L14 11 L13.4 15.4 L7.2 15.4 Z" fill="#4aa2fa"/><path d="M8 11.6 H12.8 V13 H8Z" fill="#7cc8ff" opacity=".8"/><path d="M3.9 12.6 H5.6 V15 H3.9Z" fill="#f08a24"/><path d="M14.4 12.6 H16 V15 H14.4Z" fill="#f08a24"/></svg></div>
<div class="t " style="left:1423px;top:234px">0</div>
<div class="c" style="left:294px;top:255px;width:60px;height:25px;background:#fff"></div>
<div class="c" style="left:356px;top:255px;width:63px;height:25px;background:#fff"></div>
<div class="c" style="left:421px;top:255px;width:78px;height:25px;background:#fff"></div>
<div class="c" style="left:501px;top:255px;width:231px;height:25px;background:#fff"></div>
<div class="c" style="left:734px;top:255px;width:135px;height:25px;background:#bbde6e"></div>
<div class="c" style="left:871px;top:255px;width:99px;height:25px;background:#ddedc1"></div>
<div class="c" style="left:972px;top:255px;width:104px;height:25px;background:#fff"></div>
<div class="c" style="left:1078px;top:255px;width:175px;height:25px;background:#fff"></div>
<div class="c" style="left:1255px;top:255px;width:99px;height:25px;background:#f6d193"></div>
<div class="c" style="left:1356px;top:255px;width:120px;height:25px;background:#fff"></div>
<div class="t " style="left:294px;top:261px;width:60px;text-align:center"></div>
<div class="t gr" style="left:356px;top:261px;width:63px;text-align:center">2973</div>
<div class="ell" style="left:517px;top:262px"></div>
<div class="t " style="left:531px;top:261px">R3_7_<span class="j">人間と自然</span></div>
<div class="d" style="left:852px;top:268px"></div><div class="d" style="left:857px;top:268px"></div>
<div class="d" style="left:953px;top:268px"></div><div class="d" style="left:958px;top:268px"></div>
<div class="i" style="left:1025px;top:260px"><svg width="16" height="16" viewBox="0 0 16 16"><path d="M8 8 L0.3 8 A7.7 7.7 0 0 1 13.83 2.97 Z" fill="#a8c9fd" stroke="#2f4fd0" stroke-width="1"/><path d="M8 8 L13.83 2.97 A7.7 7.7 0 0 1 11.31 14.95 Z" fill="#a6f7a0" stroke="#2ea02e" stroke-width="1"/><path d="M8 8 L11.31 14.95 A7.7 7.7 0 0 1 0.3 8 Z" fill="#feb0a8" stroke="#c83a3a" stroke-width="1"/><path d="M8 8 L13.83 2.97" stroke="#2f4fd0" stroke-width="1"/></svg></div>
<div class="d" style="left:1059px;top:267px"></div><div class="d" style="left:1064px;top:267px"></div>
<div class="d" style="left:1236px;top:268px"></div><div class="d" style="left:1241px;top:268px"></div>
<div class="d" style="left:1337px;top:268px"></div><div class="d" style="left:1342px;top:268px"></div>
<div class="i" style="left:1394px;top:260px"><svg width="16" height="16" viewBox="0 0 16 16"><path d="M1.8 8.6 Q1.4 0 6 0 Q10.2 0 9.8 5.6 L8.6 6.4 L3.6 6.6 L3.4 8.8 Z" fill="#a4541c"/><ellipse cx="6.1" cy="4.5" rx="2.7" ry="2.1" fill="#fcd9b0"/><path d="M3.4 3.2 Q6 1.2 8.8 3.4 Q8.6 1.2 6 1.1 Q3.6 1.2 3.4 3.2Z" fill="#a4541c"/><path d="M0.4 8.8 L3 6.5 L6.4 6.6 L6.8 11.6 L1.4 11.8 Z" fill="#ee74b0"/><path d="M3.6 7.4 L5.8 7.4 L6 9.6 L3.8 9.4Z" fill="#ff9ccc"/><path d="M0 8.6 L1.4 8.4 L1.6 10.8 L0.2 10.8Z" fill="#eea060"/><path d="M6.7 8.8 Q6.4 3.8 10.4 3.8 Q14.4 3.8 14.1 8.8 Z" fill="#9c521e"/><ellipse cx="10.4" cy="8.1" rx="3.1" ry="2.4" fill="#fcd6ad"/><path d="M7.3 6.8 Q10.4 4.6 13.5 6.8 Q13 4.6 10.4 4.5 Q7.8 4.6 7.3 6.8Z" fill="#9c521e"/><path d="M4.3 13 L5.6 10.8 L7.6 9.8 L13.2 9.8 L15.2 10.8 L16 13 L14 13.4 L13.8 16 L6.4 16 L6.2 13.4 Z" fill="#3c64cc"/><path d="M6.8 11 L8.2 10.4 L12.6 10.4 L14 11 L13.4 15.4 L7.2 15.4 Z" fill="#4aa2fa"/><path d="M8 11.6 H12.8 V13 H8Z" fill="#7cc8ff" opacity=".8"/><path d="M3.9 12.6 H5.6 V15 H3.9Z" fill="#f08a24"/><path d="M14.4 12.6 H16 V15 H14.4Z" fill="#f08a24"/></svg></div>
<div class="t " style="left:1423px;top:261px">0</div>
<div class="c" style="left:294px;top:282px;width:60px;height:25px;background:#f1f1f1"></div>
<div class="c" style="left:356px;top:282px;width:63px;height:25px;background:#f1f1f1"></div>
<div class="c" style="left:421px;top:282px;width:78px;height:25px;background:#f1f1f1"></div>
<div class="c" style="left:501px;top:282px;width:231px;height:25px;background:#f1f1f1"></div>
<div class="c" style="left:734px;top:282px;width:135px;height:25px;background:#bbde6e"></div>
<div class="c" style="left:871px;top:282px;width:99px;height:25px;background:#ddedc1"></div>
<div class="c" style="left:972px;top:282px;width:104px;height:25px;background:#f1f1f1"></div>
<div class="c" style="left:1078px;top:282px;width:175px;height:25px;background:#f1f1f1"></div>
<div class="c" style="left:1255px;top:282px;width:99px;height:25px;background:#f6d193"></div>
<div class="c" style="left:1356px;top:282px;width:120px;height:25px;background:#f1f1f1"></div>
<div class="t " style="left:294px;top:288px;width:60px;text-align:center"></div>
<div class="t gr" style="left:356px;top:288px;width:63px;text-align:center">2972</div>
<div class="ell" style="left:517px;top:289px"></div>
<div class="t " style="left:531px;top:288px">R3_8_<span class="j">剽窃</span></div>
<div class="d" style="left:852px;top:295px"></div><div class="d" style="left:857px;top:295px"></div>
<div class="d" style="left:953px;top:295px"></div><div class="d" style="left:958px;top:295px"></div>
<div class="i" style="left:1025px;top:287px"><svg width="16" height="16" viewBox="0 0 16 16"><path d="M8 8 L0.3 8 A7.7 7.7 0 0 1 13.83 2.97 Z" fill="#a8c9fd" stroke="#2f4fd0" stroke-width="1"/><path d="M8 8 L13.83 2.97 A7.7 7.7 0 0 1 11.31 14.95 Z" fill="#a6f7a0" stroke="#2ea02e" stroke-width="1"/><path d="M8 8 L11.31 14.95 A7.7 7.7 0 0 1 0.3 8 Z" fill="#feb0a8" stroke="#c83a3a" stroke-width="1"/><path d="M8 8 L13.83 2.97" stroke="#2f4fd0" stroke-width="1"/></svg></div>
<div class="d" style="left:1059px;top:294px"></div><div class="d" style="left:1064px;top:294px"></div>
<div class="d" style="left:1236px;top:295px"></div><div class="d" style="left:1241px;top:295px"></div>
<div class="d" style="left:1337px;top:295px"></div><div class="d" style="left:1342px;top:295px"></div>
<div class="i" style="left:1394px;top:287px"><svg width="16" height="16" viewBox="0 0 16 16"><path d="M1.8 8.6 Q1.4 0 6 0 Q10.2 0 9.8 5.6 L8.6 6.4 L3.6 6.6 L3.4 8.8 Z" fill="#a4541c"/><ellipse cx="6.1" cy="4.5" rx="2.7" ry="2.1" fill="#fcd9b0"/><path d="M3.4 3.2 Q6 1.2 8.8 3.4 Q8.6 1.2 6 1.1 Q3.6 1.2 3.4 3.2Z" fill="#a4541c"/><path d="M0.4 8.8 L3 6.5 L6.4 6.6 L6.8 11.6 L1.4 11.8 Z" fill="#ee74b0"/><path d="M3.6 7.4 L5.8 7.4 L6 9.6 L3.8 9.4Z" fill="#ff9ccc"/><path d="M0 8.6 L1.4 8.4 L1.6 10.8 L0.2 10.8Z" fill="#eea060"/><path d="M6.7 8.8 Q6.4 3.8 10.4 3.8 Q14.4 3.8 14.1 8.8 Z" fill="#9c521e"/><ellipse cx="10.4" cy="8.1" rx="3.1" ry="2.4" fill="#fcd6ad"/><path d="M7.3 6.8 Q10.4 4.6 13.5 6.8 Q13 4.6 10.4 4.5 Q7.8 4.6 7.3 6.8Z" fill="#9c521e"/><path d="M4.3 13 L5.6 10.8 L7.6 9.8 L13.2 9.8 L15.2 10.8 L16 13 L14 13.4 L13.8 16 L6.4 16 L6.2 13.4 Z" fill="#3c64cc"/><path d="M6.8 11 L8.2 10.4 L12.6 10.4 L14 11 L13.4 15.4 L7.2 15.4 Z" fill="#4aa2fa"/><path d="M8 11.6 H12.8 V13 H8Z" fill="#7cc8ff" opacity=".8"/><path d="M3.9 12.6 H5.6 V15 H3.9Z" fill="#f08a24"/><path d="M14.4 12.6 H16 V15 H14.4Z" fill="#f08a24"/></svg></div>
<div class="t " style="left:1423px;top:288px">0</div>
<div class="c" style="left:294px;top:309px;width:60px;height:25px;background:#fff"></div>
<div class="c" style="left:356px;top:309px;width:63px;height:25px;background:#fff"></div>
<div class="c" style="left:421px;top:309px;width:78px;height:25px;background:#fff"></div>
<div class="c" style="left:501px;top:309px;width:231px;height:25px;background:#fff"></div>
<div class="c" style="left:734px;top:309px;width:135px;height:25px;background:#bbde6e"></div>
<div class="c" style="left:871px;top:309px;width:99px;height:25px;background:#ddedc1"></div>
<div class="c" style="left:972px;top:309px;width:104px;height:25px;background:#fff"></div>
<div class="c" style="left:1078px;top:309px;width:175px;height:25px;background:#fff"></div>
<div class="c" style="left:1255px;top:309px;width:99px;height:25px;background:#f6d193"></div>
<div class="c" style="left:1356px;top:309px;width:120px;height:25px;background:#fff"></div>
<div class="t " style="left:294px;top:315px;width:60px;text-align:center"></div>
<div class="t gr" style="left:356px;top:315px;width:63px;text-align:center">2971</div>
<div class="ell" style="left:517px;top:316px"></div>
<div class="t " style="left:531px;top:315px">R3_9_<span class="j">ＤＮＡ</span></div>
<div class="d" style="left:852px;top:322px"></div><div class="d" style="left:857px;top:322px"></div>
<div class="d" style="left:953px;top:322px"></div><div class="d" style="left:958px;top:322px"></div>
<div class="i" style="left:1025px;top:314px"><svg width="16" height="16" viewBox="0 0 16 16"><path d="M8 8 L0.3 8 A7.7 7.7 0 0 1 13.83 2.97 Z" fill="#a8c9fd" stroke="#2f4fd0" stroke-width="1"/><path d="M8 8 L13.83 2.97 A7.7 7.7 0 0 1 11.31 14.95 Z" fill="#a6f7a0" stroke="#2ea02e" stroke-width="1"/><path d="M8 8 L11.31 14.95 A7.7 7.7 0 0 1 0.3 8 Z" fill="#feb0a8" stroke="#c83a3a" stroke-width="1"/><path d="M8 8 L13.83 2.97" stroke="#2f4fd0" stroke-width="1"/></svg></div>
<div class="d" style="left:1059px;top:321px"></div><div class="d" style="left:1064px;top:321px"></div>
<div class="d" style="left:1236px;top:322px"></div><div class="d" style="left:1241px;top:322px"></div>
<div class="d" style="left:1337px;top:322px"></div><div class="d" style="left:1342px;top:322px"></div>
<div class="i" style="left:1394px;top:314px"><svg width="16" height="16" viewBox="0 0 16 16"><path d="M1.8 8.6 Q1.4 0 6 0 Q10.2 0 9.8 5.6 L8.6 6.4 L3.6 6.6 L3.4 8.8 Z" fill="#a4541c"/><ellipse cx="6.1" cy="4.5" rx="2.7" ry="2.1" fill="#fcd9b0"/><path d="M3.4 3.2 Q6 1.2 8.8 3.4 Q8.6 1.2 6 1.1 Q3.6 1.2 3.4 3.2Z" fill="#a4541c"/><path d="M0.4 8.8 L3 6.5 L6.4 6.6 L6.8 11.6 L1.4 11.8 Z" fill="#ee74b0"/><path d="M3.6 7.4 L5.8 7.4 L6 9.6 L3.8 9.4Z" fill="#ff9ccc"/><path d="M0 8.6 L1.4 8.4 L1.6 10.8 L0.2 10.8Z" fill="#eea060"/><path d="M6.7 8.8 Q6.4 3.8 10.4 3.8 Q14.4 3.8 14.1 8.8 Z" fill="#9c521e"/><ellipse cx="10.4" cy="8.1" rx="3.1" ry="2.4" fill="#fcd6ad"/><path d="M7.3 6.8 Q10.4 4.6 13.5 6.8 Q13 4.6 10.4 4.5 Q7.8 4.6 7.3 6.8Z" fill="#9c521e"/><path d="M4.3 13 L5.6 10.8 L7.6 9.8 L13.2 9.8 L15.2 10.8 L16 13 L14 13.4 L13.8 16 L6.4 16 L6.2 13.4 Z" fill="#3c64cc"/><path d="M6.8 11 L8.2 10.4 L12.6 10.4 L14 11 L13.4 15.4 L7.2 15.4 Z" fill="#4aa2fa"/><path d="M8 11.6 H12.8 V13 H8Z" fill="#7cc8ff" opacity=".8"/><path d="M3.9 12.6 H5.6 V15 H3.9Z" fill="#f08a24"/><path d="M14.4 12.6 H16 V15 H14.4Z" fill="#f08a24"/></svg></div>
<div class="t " style="left:1423px;top:315px">0</div>
<div class="c" style="left:294px;top:336px;width:60px;height:25px;background:#f1f1f1"></div>
<div class="c" style="left:356px;top:336px;width:63px;height:25px;background:#f1f1f1"></div>
<div class="c" style="left:421px;top:336px;width:78px;height:25px;background:#f1f1f1"></div>
<div class="c" style="left:501px;top:336px;width:231px;height:25px;background:#f1f1f1"></div>
<div class="c" style="left:734px;top:336px;width:135px;height:25px;background:#bbde6e"></div>
<div class="c" style="left:871px;top:336px;width:99px;height:25px;background:#ddedc1"></div>
<div class="c" style="left:972px;top:336px;width:104px;height:25px;background:#f1f1f1"></div>
<div class="c" style="left:1078px;top:336px;width:175px;height:25px;background:#f1f1f1"></div>
<div class="c" style="left:1255px;top:336px;width:99px;height:25px;background:#f6d193"></div>
<div class="c" style="left:1356px;top:336px;width:120px;height:25px;background:#f1f1f1"></div>
<div class="t " style="left:294px;top:342px;width:60px;text-align:center"></div>
<div class="t gr" style="left:356px;top:342px;width:63px;text-align:center">2970</div>
<div class="ell" style="left:517px;top:343px"></div>
<div class="t " style="left:531px;top:342px">R3_10_DNA2</div>
<div class="d" style="left:852px;top:349px"></div><div class="d" style="left:857px;top:349px"></div>
<div class="d" style="left:953px;top:349px"></div><div class="d" style="left:958px;top:349px"></div>
<div class="i" style="left:1025px;top:341px"><svg width="16" height="16" viewBox="0 0 16 16"><path d="M8 8 L0.3 8 A7.7 7.7 0 0 1 13.83 2.97 Z" fill="#a8c9fd" stroke="#2f4fd0" stroke-width="1"/><path d="M8 8 L13.83 2.97 A7.7 7.7 0 0 1 11.31 14.95 Z" fill="#a6f7a0" stroke="#2ea02e" stroke-width="1"/><path d="M8 8 L11.31 14.95 A7.7 7.7 0 0 1 0.3 8 Z" fill="#feb0a8" stroke="#c83a3a" stroke-width="1"/><path d="M8 8 L13.83 2.97" stroke="#2f4fd0" stroke-width="1"/></svg></div>
<div class="d" style="left:1059px;top:348px"></div><div class="d" style="left:1064px;top:348px"></div>
<div class="d" style="left:1236px;top:349px"></div><div class="d" style="left:1241px;top:349px"></div>
<div class="d" style="left:1337px;top:349px"></div><div class="d" style="left:1342px;top:349px"></div>
<div class="i" style="left:1394px;top:341px"><svg width="16" height="16" viewBox="0 0 16 16"><path d="M1.8 8.6 Q1.4 0 6 0 Q10.2 0 9.8 5.6 L8.6 6.4 L3.6 6.6 L3.4 8.8 Z" fill="#a4541c"/><ellipse cx="6.1" cy="4.5" rx="2.7" ry="2.1" fill="#fcd9b0"/><path d="M3.4 3.2 Q6 1.2 8.8 3.4 Q8.6 1.2 6 1.1 Q3.6 1.2 3.4 3.2Z" fill="#a4541c"/><path d="M0.4 8.8 L3 6.5 L6.4 6.6 L6.8 11.6 L1.4 11.8 Z" fill="#ee74b0"/><path d="M3.6 7.4 L5.8 7.4 L6 9.6 L3.8 9.4Z" fill="#ff9ccc"/><path d="M0 8.6 L1.4 8.4 L1.6 10.8 L0.2 10.8Z" fill="#eea060"/><path d="M6.7 8.8 Q6.4 3.8 10.4 3.8 Q14.4 3.8 14.1 8.8 Z" fill="#9c521e"/><ellipse cx="10.4" cy="8.1" rx="3.1" ry="2.4" fill="#fcd6ad"/><path d="M7.3 6.8 Q10.4 4.6 13.5 6.8 Q13 4.6 10.4 4.5 Q7.8 4.6 7.3 6.8Z" fill="#9c521e"/><path d="M4.3 13 L5.6 10.8 L7.6 9.8 L13.2 9.8 L15.2 10.8 L16 13 L14 13.4 L13.8 16 L6.4 16 L6.2 13.4 Z" fill="#3c64cc"/><path d="M6.8 11 L8.2 10.4 L12.6 10.4 L14 11 L13.4 15.4 L7.2 15.4 Z" fill="#4aa2fa"/><path d="M8 11.6 H12.8 V13 H8Z" fill="#7cc8ff" opacity=".8"/><path d="M3.9 12.6 H5.6 V15 H3.9Z" fill="#f08a24"/><path d="M14.4 12.6 H16 V15 H14.4Z" fill="#f08a24"/></svg></div>
<div class="t " style="left:1423px;top:342px">0</div>
<div class="c" style="left:294px;top:363px;width:60px;height:26px;background:#fff"></div>
<div class="c" style="left:356px;top:363px;width:63px;height:26px;background:#fff"></div>
<div class="c" style="left:421px;top:363px;width:78px;height:26px;background:#fff"></div>
<div class="c" style="left:501px;top:363px;width:231px;height:26px;background:#fff"></div>
<div class="c" style="left:734px;top:363px;width:135px;height:26px;background:#bbde6e"></div>
<div class="c" style="left:871px;top:363px;width:99px;height:26px;background:#ddedc1"></div>
<div class="c" style="left:972px;top:363px;width:104px;height:26px;background:#fff"></div>
<div class="c" style="left:1078px;top:363px;width:175px;height:26px;background:#fff"></div>
<div class="c" style="left:1255px;top:363px;width:99px;height:26px;background:#f6d193"></div>
<div class="c" style="left:1356px;top:363px;width:120px;height:26px;background:#fff"></div>
<div class="t " style="left:294px;top:369px;width:60px;text-align:center">0</div>
<div class="t " style="left:356px;top:369px;width:63px;text-align:center">2967</div>
<div class="i" style="left:507px;top:369px;width:12px"><svg width="12" height="16" viewBox="0 0 12 16"><path d="M0.6 0.6 H8.4 L11.4 3.6 V15.4 H0.6 Z" fill="#eef4f4" stroke="#7a8888" stroke-width="1.1"/><path d="M8.4 0.6 V3.6 H11.4" fill="#fff" stroke="#7a8888" stroke-width="0.8"/><rect x="2" y="4" width="1.3" height="1.3" fill="#2a2"/><rect x="2" y="6" width="1.3" height="1.3" fill="#c55"/><rect x="2" y="8" width="1.3" height="1.3" fill="#46e"/><rect x="2" y="10" width="1.3" height="1.3" fill="#444"/><rect x="2" y="12" width="1.3" height="1.3" fill="#46e"/><path d="M4 4.6H7M4 6.6H9M4 8.6H8M4 10.6H9M4 12.6H7" stroke="#d0d8d8" stroke-width="0.9"/></svg></div>
<div class="t red" style="left:525px;top:369px">Reading7</div>
<div class="d" style="left:852px;top:376px"></div><div class="d" style="left:851px;top:376px;width:1px;opacity:.5"></div><div class="d" style="left:857px;top:376px"></div><div class="d" style="left:856px;top:376px;width:1px;opacity:.5"></div>
<div class="d" style="left:953px;top:376px"></div><div class="d" style="left:952px;top:376px;width:1px;opacity:.5"></div><div class="d" style="left:958px;top:376px"></div><div class="d" style="left:957px;top:376px;width:1px;opacity:.5"></div>
<div class="i" style="left:1024px;top:369px"><svg width="16" height="16" viewBox="0 0 16 16"><path d="M8 8 L0.3 8 A7.7 7.7 0 0 1 13.83 2.97 Z" fill="#a8c9fd" stroke="#2f4fd0" stroke-width="1"/><path d="M8 8 L13.83 2.97 A7.7 7.7 0 0 1 11.31 14.95 Z" fill="#a6f7a0" stroke="#2ea02e" stroke-width="1"/><path d="M8 8 L11.31 14.95 A7.7 7.7 0 0 1 0.3 8 Z" fill="#feb0a8" stroke="#c83a3a" stroke-width="1"/><path d="M8 8 L13.83 2.97" stroke="#2f4fd0" stroke-width="1"/></svg></div>
<div class="d" style="left:1059px;top:376px"></div><div class="d" style="left:1058px;top:376px;width:1px;opacity:.5"></div><div class="d" style="left:1064px;top:376px"></div><div class="d" style="left:1063px;top:376px;width:1px;opacity:.5"></div>
<div class="d" style="left:1236px;top:376px"></div><div class="d" style="left:1235px;top:376px;width:1px;opacity:.5"></div><div class="d" style="left:1241px;top:376px"></div><div class="d" style="left:1240px;top:376px;width:1px;opacity:.5"></div>
<div class="d" style="left:1337px;top:376px"></div><div class="d" style="left:1336px;top:376px;width:1px;opacity:.5"></div><div class="d" style="left:1342px;top:376px"></div><div class="d" style="left:1341px;top:376px;width:1px;opacity:.5"></div>
<div class="i" style="left:1394px;top:369px"><svg width="16" height="16" viewBox="0 0 16 16"><path d="M1.8 8.6 Q1.4 0 6 0 Q10.2 0 9.8 5.6 L8.6 6.4 L3.6 6.6 L3.4 8.8 Z" fill="#a4541c"/><ellipse cx="6.1" cy="4.5" rx="2.7" ry="2.1" fill="#fcd9b0"/><path d="M3.4 3.2 Q6 1.2 8.8 3.4 Q8.6 1.2 6 1.1 Q3.6 1.2 3.4 3.2Z" fill="#a4541c"/><path d="M0.4 8.8 L3 6.5 L6.4 6.6 L6.8 11.6 L1.4 11.8 Z" fill="#ee74b0"/><path d="M3.6 7.4 L5.8 7.4 L6 9.6 L3.8 9.4Z" fill="#ff9ccc"/><path d="M0 8.6 L1.4 8.4 L1.6 10.8 L0.2 10.8Z" fill="#eea060"/><path d="M6.7 8.8 Q6.4 3.8 10.4 3.8 Q14.4 3.8 14.1 8.8 Z" fill="#9c521e"/><ellipse cx="10.4" cy="8.1" rx="3.1" ry="2.4" fill="#fcd6ad"/><path d="M7.3 6.8 Q10.4 4.6 13.5 6.8 Q13 4.6 10.4 4.5 Q7.8 4.6 7.3 6.8Z" fill="#9c521e"/><path d="M4.3 13 L5.6 10.8 L7.6 9.8 L13.2 9.8 L15.2 10.8 L16 13 L14 13.4 L13.8 16 L6.4 16 L6.2 13.4 Z" fill="#3c64cc"/><path d="M6.8 11 L8.2 10.4 L12.6 10.4 L14 11 L13.4 15.4 L7.2 15.4 Z" fill="#4aa2fa"/><path d="M8 11.6 H12.8 V13 H8Z" fill="#7cc8ff" opacity=".8"/><path d="M3.9 12.6 H5.6 V15 H3.9Z" fill="#f08a24"/><path d="M14.4 12.6 H16 V15 H14.4Z" fill="#f08a24"/></svg></div>
<div class="t b" style="left:1419px;top:369px">0</div>
<div class="c" style="left:294px;top:391px;width:60px;height:25px;background:#f1f1f1"></div>
<div class="c" style="left:356px;top:391px;width:63px;height:25px;background:#f1f1f1"></div>
<div class="c" style="left:421px;top:391px;width:78px;height:25px;background:#f1f1f1"></div>
<div class="c" style="left:501px;top:391px;width:231px;height:25px;background:#f1f1f1"></div>
<div class="c" style="left:734px;top:391px;width:135px;height:25px;background:#bbde6e"></div>
<div class="c" style="left:871px;top:391px;width:99px;height:25px;background:#ddedc1"></div>
<div class="c" style="left:972px;top:391px;width:104px;height:25px;background:#f1f1f1"></div>
<div class="c" style="left:1078px;top:391px;width:175px;height:25px;background:#f1f1f1"></div>
<div class="c" style="left:1255px;top:391px;width:99px;height:25px;background:#f6d193"></div>
<div class="c" style="left:1356px;top:391px;width:120px;height:25px;background:#f1f1f1"></div>
<div class="t " style="left:294px;top:397px;width:60px;text-align:center"></div>
<div class="t gr" style="left:356px;top:397px;width:63px;text-align:center">2966</div>
<div class="ell" style="left:517px;top:398px"></div>
<div class="t " style="left:531px;top:397px">Home</div>
<div class="d" style="left:852px;top:404px"></div><div class="d" style="left:857px;top:404px"></div>
<div class="d" style="left:953px;top:404px"></div><div class="d" style="left:958px;top:404px"></div>
<div class="i" style="left:1025px;top:396px"><svg width="16" height="16" viewBox="0 0 16 16"><path d="M8 8 L0.3 8 A7.7 7.7 0 0 1 13.83 2.97 Z" fill="#a8c9fd" stroke="#2f4fd0" stroke-width="1"/><path d="M8 8 L13.83 2.97 A7.7 7.7 0 0 1 11.31 14.95 Z" fill="#a6f7a0" stroke="#2ea02e" stroke-width="1"/><path d="M8 8 L11.31 14.95 A7.7 7.7 0 0 1 0.3 8 Z" fill="#feb0a8" stroke="#c83a3a" stroke-width="1"/><path d="M8 8 L13.83 2.97" stroke="#2f4fd0" stroke-width="1"/></svg></div>
<div class="d" style="left:1059px;top:403px"></div><div class="d" style="left:1064px;top:403px"></div>
<div class="d" style="left:1236px;top:404px"></div><div class="d" style="left:1241px;top:404px"></div>
<div class="d" style="left:1337px;top:404px"></div><div class="d" style="left:1342px;top:404px"></div>
<div class="i" style="left:1394px;top:396px"><svg width="16" height="16" viewBox="0 0 16 16"><path d="M1.8 8.6 Q1.4 0 6 0 Q10.2 0 9.8 5.6 L8.6 6.4 L3.6 6.6 L3.4 8.8 Z" fill="#a4541c"/><ellipse cx="6.1" cy="4.5" rx="2.7" ry="2.1" fill="#fcd9b0"/><path d="M3.4 3.2 Q6 1.2 8.8 3.4 Q8.6 1.2 6 1.1 Q3.6 1.2 3.4 3.2Z" fill="#a4541c"/><path d="M0.4 8.8 L3 6.5 L6.4 6.6 L6.8 11.6 L1.4 11.8 Z" fill="#ee74b0"/><path d="M3.6 7.4 L5.8 7.4 L6 9.6 L3.8 9.4Z" fill="#ff9ccc"/><path d="M0 8.6 L1.4 8.4 L1.6 10.8 L0.2 10.8Z" fill="#eea060"/><path d="M6.7 8.8 Q6.4 3.8 10.4 3.8 Q14.4 3.8 14.1 8.8 Z" fill="#9c521e"/><ellipse cx="10.4" cy="8.1" rx="3.1" ry="2.4" fill="#fcd6ad"/><path d="M7.3 6.8 Q10.4 4.6 13.5 6.8 Q13 4.6 10.4 4.5 Q7.8 4.6 7.3 6.8Z" fill="#9c521e"/><path d="M4.3 13 L5.6 10.8 L7.6 9.8 L13.2 9.8 L15.2 10.8 L16 13 L14 13.4 L13.8 16 L6.4 16 L6.2 13.4 Z" fill="#3c64cc"/><path d="M6.8 11 L8.2 10.4 L12.6 10.4 L14 11 L13.4 15.4 L7.2 15.4 Z" fill="#4aa2fa"/><path d="M8 11.6 H12.8 V13 H8Z" fill="#7cc8ff" opacity=".8"/><path d="M3.9 12.6 H5.6 V15 H3.9Z" fill="#f08a24"/><path d="M14.4 12.6 H16 V15 H14.4Z" fill="#f08a24"/></svg></div>
<div class="t " style="left:1423px;top:397px">0</div>
<div class="c" style="left:294px;top:418px;width:60px;height:25px;background:#fff"></div>
<div class="c" style="left:356px;top:418px;width:63px;height:25px;background:#fff"></div>
<div class="c" style="left:421px;top:418px;width:78px;height:25px;background:#fff"></div>
<div class="c" style="left:501px;top:418px;width:231px;height:25px;background:#fff"></div>
<div class="c" style="left:734px;top:418px;width:135px;height:25px;background:#bbde6e"></div>
<div class="c" style="left:871px;top:418px;width:99px;height:25px;background:#ddedc1"></div>
<div class="c" style="left:972px;top:418px;width:104px;height:25px;background:#fff"></div>
<div class="c" style="left:1078px;top:418px;width:175px;height:25px;background:#fff"></div>
<div class="c" style="left:1255px;top:418px;width:99px;height:25px;background:#f6d193"></div>
<div class="c" style="left:1356px;top:418px;width:120px;height:25px;background:#fff"></div>
<div class="t " style="left:294px;top:424px;width:60px;text-align:center"></div>
<div class="t gr" style="left:356px;top:424px;width:63px;text-align:center">2964</div>
<div class="ell" style="left:517px;top:425px"></div>
<div class="t " style="left:531px;top:424px">R2_17_<span class="j">語彙と読解力</span></div>
<div class="d" style="left:852px;top:431px"></div><div class="d" style="left:857px;top:431px"></div>
<div class="d" style="left:953px;top:431px"></div><div class="d" style="left:958px;top:431px"></div>
<div class="i" style="left:1025px;top:423px"><svg width="16" height="16" viewBox="0 0 16 16"><path d="M8 8 L0.3 8 A7.7 7.7 0 0 1 13.83 2.97 Z" fill="#a8c9fd" stroke="#2f4fd0" stroke-width="1"/><path d="M8 8 L13.83 2.97 A7.7 7.7 0 0 1 11.31 14.95 Z" fill="#a6f7a0" stroke="#2ea02e" stroke-width="1"/><path d="M8 8 L11.31 14.95 A7.7 7.7 0 0 1 0.3 8 Z" fill="#feb0a8" stroke="#c83a3a" stroke-width="1"/><path d="M8 8 L13.83 2.97" stroke="#2f4fd0" stroke-width="1"/></svg></div>
<div class="d" style="left:1059px;top:430px"></div><div class="d" style="left:1064px;top:430px"></div>
<div class="d" style="left:1236px;top:431px"></div><div class="d" style="left:1241px;top:431px"></div>
<div class="d" style="left:1337px;top:431px"></div><div class="d" style="left:1342px;top:431px"></div>
<div class="i" style="left:1394px;top:423px"><svg width="16" height="16" viewBox="0 0 16 16"><path d="M1.8 8.6 Q1.4 0 6 0 Q10.2 0 9.8 5.6 L8.6 6.4 L3.6 6.6 L3.4 8.8 Z" fill="#a4541c"/><ellipse cx="6.1" cy="4.5" rx="2.7" ry="2.1" fill="#fcd9b0"/><path d="M3.4 3.2 Q6 1.2 8.8 3.4 Q8.6 1.2 6 1.1 Q3.6 1.2 3.4 3.2Z" fill="#a4541c"/><path d="M0.4 8.8 L3 6.5 L6.4 6.6 L6.8 11.6 L1.4 11.8 Z" fill="#ee74b0"/><path d="M3.6 7.4 L5.8 7.4 L6 9.6 L3.8 9.4Z" fill="#ff9ccc"/><path d="M0 8.6 L1.4 8.4 L1.6 10.8 L0.2 10.8Z" fill="#eea060"/><path d="M6.7 8.8 Q6.4 3.8 10.4 3.8 Q14.4 3.8 14.1 8.8 Z" fill="#9c521e"/><ellipse cx="10.4" cy="8.1" rx="3.1" ry="2.4" fill="#fcd6ad"/><path d="M7.3 6.8 Q10.4 4.6 13.5 6.8 Q13 4.6 10.4 4.5 Q7.8 4.6 7.3 6.8Z" fill="#9c521e"/><path d="M4.3 13 L5.6 10.8 L7.6 9.8 L13.2 9.8 L15.2 10.8 L16 13 L14 13.4 L13.8 16 L6.4 16 L6.2 13.4 Z" fill="#3c64cc"/><path d="M6.8 11 L8.2 10.4 L12.6 10.4 L14 11 L13.4 15.4 L7.2 15.4 Z" fill="#4aa2fa"/><path d="M8 11.6 H12.8 V13 H8Z" fill="#7cc8ff" opacity=".8"/><path d="M3.9 12.6 H5.6 V15 H3.9Z" fill="#f08a24"/><path d="M14.4 12.6 H16 V15 H14.4Z" fill="#f08a24"/></svg></div>
<div class="t " style="left:1423px;top:424px">0</div>
<div class="c" style="left:294px;top:445px;width:60px;height:25px;background:#f1f1f1"></div>
<div class="c" style="left:356px;top:445px;width:63px;height:25px;background:#f1f1f1"></div>
<div class="c" style="left:421px;top:445px;width:78px;height:25px;background:#f1f1f1"></div>
<div class="c" style="left:501px;top:445px;width:231px;height:25px;background:#f1f1f1"></div>
<div class="c" style="left:734px;top:445px;width:135px;height:25px;background:#bbde6e"></div>
<div class="c" style="left:871px;top:445px;width:99px;height:25px;background:#ddedc1"></div>
<div class="c" style="left:972px;top:445px;width:104px;height:25px;background:#f1f1f1"></div>
<div class="c" style="left:1078px;top:445px;width:175px;height:25px;background:#f1f1f1"></div>
<div class="c" style="left:1255px;top:445px;width:99px;height:25px;background:#f6d193"></div>
<div class="c" style="left:1356px;top:445px;width:120px;height:25px;background:#f1f1f1"></div>
<div class="t " style="left:294px;top:451px;width:60px;text-align:center"></div>
<div class="t gr" style="left:356px;top:451px;width:63px;text-align:center">2963</div>
<div class="ell" style="left:517px;top:452px"></div>
<div class="t " style="left:531px;top:451px">R2_18_<span class="j">子供の問題</span></div>
<div class="d" style="left:852px;top:458px"></div><div class="d" style="left:857px;top:458px"></div>
<div class="d" style="left:953px;top:458px"></div><div class="d" style="left:958px;top:458px"></div>
<div class="i" style="left:1025px;top:450px"><svg width="16" height="16" viewBox="0 0 16 16"><path d="M8 8 L0.3 8 A7.7 7.7 0 0 1 13.83 2.97 Z" fill="#a8c9fd" stroke="#2f4fd0" stroke-width="1"/><path d="M8 8 L13.83 2.97 A7.7 7.7 0 0 1 11.31 14.95 Z" fill="#a6f7a0" stroke="#2ea02e" stroke-width="1"/><path d="M8 8 L11.31 14.95 A7.7 7.7 0 0 1 0.3 8 Z" fill="#feb0a8" stroke="#c83a3a" stroke-width="1"/><path d="M8 8 L13.83 2.97" stroke="#2f4fd0" stroke-width="1"/></svg></div>
<div class="d" style="left:1059px;top:457px"></div><div class="d" style="left:1064px;top:457px"></div>
<div class="d" style="left:1236px;top:458px"></div><div class="d" style="left:1241px;top:458px"></div>
<div class="d" style="left:1337px;top:458px"></div><div class="d" style="left:1342px;top:458px"></div>
<div class="i" style="left:1394px;top:450px"><svg width="16" height="16" viewBox="0 0 16 16"><path d="M1.8 8.6 Q1.4 0 6 0 Q10.2 0 9.8 5.6 L8.6 6.4 L3.6 6.6 L3.4 8.8 Z" fill="#a4541c"/><ellipse cx="6.1" cy="4.5" rx="2.7" ry="2.1" fill="#fcd9b0"/><path d="M3.4 3.2 Q6 1.2 8.8 3.4 Q8.6 1.2 6 1.1 Q3.6 1.2 3.4 3.2Z" fill="#a4541c"/><path d="M0.4 8.8 L3 6.5 L6.4 6.6 L6.8 11.6 L1.4 11.8 Z" fill="#ee74b0"/><path d="M3.6 7.4 L5.8 7.4 L6 9.6 L3.8 9.4Z" fill="#ff9ccc"/><path d="M0 8.6 L1.4 8.4 L1.6 10.8 L0.2 10.8Z" fill="#eea060"/><path d="M6.7 8.8 Q6.4 3.8 10.4 3.8 Q14.4 3.8 14.1 8.8 Z" fill="#9c521e"/><ellipse cx="10.4" cy="8.1" rx="3.1" ry="2.4" fill="#fcd6ad"/><path d="M7.3 6.8 Q10.4 4.6 13.5 6.8 Q13 4.6 10.4 4.5 Q7.8 4.6 7.3 6.8Z" fill="#9c521e"/><path d="M4.3 13 L5.6 10.8 L7.6 9.8 L13.2 9.8 L15.2 10.8 L16 13 L14 13.4 L13.8 16 L6.4 16 L6.2 13.4 Z" fill="#3c64cc"/><path d="M6.8 11 L8.2 10.4 L12.6 10.4 L14 11 L13.4 15.4 L7.2 15.4 Z" fill="#4aa2fa"/><path d="M8 11.6 H12.8 V13 H8Z" fill="#7cc8ff" opacity=".8"/><path d="M3.9 12.6 H5.6 V15 H3.9Z" fill="#f08a24"/><path d="M14.4 12.6 H16 V15 H14.4Z" fill="#f08a24"/></svg></div>
<div class="t " style="left:1423px;top:451px">0</div>
<div class="c" style="left:294px;top:472px;width:60px;height:25px;background:#fff"></div>
<div class="c" style="left:356px;top:472px;width:63px;height:25px;background:#fff"></div>
<div class="c" style="left:421px;top:472px;width:78px;height:25px;background:#fff"></div>
<div class="c" style="left:501px;top:472px;width:231px;height:25px;background:#fff"></div>
<div class="c" style="left:734px;top:472px;width:135px;height:25px;background:#bbde6e"></div>
<div class="c" style="left:871px;top:472px;width:99px;height:25px;background:#ddedc1"></div>
<div class="c" style="left:972px;top:472px;width:104px;height:25px;background:#fff"></div>
<div class="c" style="left:1078px;top:472px;width:175px;height:25px;background:#fff"></div>
<div class="c" style="left:1255px;top:472px;width:99px;height:25px;background:#f6d193"></div>
<div class="c" style="left:1356px;top:472px;width:120px;height:25px;background:#fff"></div>
<div class="t " style="left:294px;top:478px;width:60px;text-align:center"></div>
<div class="t gr" style="left:356px;top:478px;width:63px;text-align:center">2962</div>
<div class="ell" style="left:517px;top:479px"></div>
<div class="t " style="left:531px;top:478px">R2_19_<span class="j">カラス１</span></div>
<div class="d" style="left:852px;top:485px"></div><div class="d" style="left:857px;top:485px"></div>
<div class="d" style="left:953px;top:485px"></div><div class="d" style="left:958px;top:485px"></div>
<div class="i" style="left:1025px;top:477px"><svg width="16" height="16" viewBox="0 0 16 16"><path d="M8 8 L0.3 8 A7.7 7.7 0 0 1 13.83 2.97 Z" fill="#a8c9fd" stroke="#2f4fd0" stroke-width="1"/><path d="M8 8 L13.83 2.97 A7.7 7.7 0 0 1 11.31 14.95 Z" fill="#a6f7a0" stroke="#2ea02e" stroke-width="1"/><path d="M8 8 L11.31 14.95 A7.7 7.7 0 0 1 0.3 8 Z" fill="#feb0a8" stroke="#c83a3a" stroke-width="1"/><path d="M8 8 L13.83 2.97" stroke="#2f4fd0" stroke-width="1"/></svg></div>
<div class="d" style="left:1059px;top:484px"></div><div class="d" style="left:1064px;top:484px"></div>
<div class="d" style="left:1236px;top:485px"></div><div class="d" style="left:1241px;top:485px"></div>
<div class="d" style="left:1337px;top:485px"></div><div class="d" style="left:1342px;top:485px"></div>
<div class="i" style="left:1394px;top:477px"><svg width="16" height="16" viewBox="0 0 16 16"><path d="M1.8 8.6 Q1.4 0 6 0 Q10.2 0 9.8 5.6 L8.6 6.4 L3.6 6.6 L3.4 8.8 Z" fill="#a4541c"/><ellipse cx="6.1" cy="4.5" rx="2.7" ry="2.1" fill="#fcd9b0"/><path d="M3.4 3.2 Q6 1.2 8.8 3.4 Q8.6 1.2 6 1.1 Q3.6 1.2 3.4 3.2Z" fill="#a4541c"/><path d="M0.4 8.8 L3 6.5 L6.4 6.6 L6.8 11.6 L1.4 11.8 Z" fill="#ee74b0"/><path d="M3.6 7.4 L5.8 7.4 L6 9.6 L3.8 9.4Z" fill="#ff9ccc"/><path d="M0 8.6 L1.4 8.4 L1.6 10.8 L0.2 10.8Z" fill="#eea060"/><path d="M6.7 8.8 Q6.4 3.8 10.4 3.8 Q14.4 3.8 14.1 8.8 Z" fill="#9c521e"/><ellipse cx="10.4" cy="8.1" rx="3.1" ry="2.4" fill="#fcd6ad"/><path d="M7.3 6.8 Q10.4 4.6 13.5 6.8 Q13 4.6 10.4 4.5 Q7.8 4.6 7.3 6.8Z" fill="#9c521e"/><path d="M4.3 13 L5.6 10.8 L7.6 9.8 L13.2 9.8 L15.2 10.8 L16 13 L14 13.4 L13.8 16 L6.4 16 L6.2 13.4 Z" fill="#3c64cc"/><path d="M6.8 11 L8.2 10.4 L12.6 10.4 L14 11 L13.4 15.4 L7.2 15.4 Z" fill="#4aa2fa"/><path d="M8 11.6 H12.8 V13 H8Z" fill="#7cc8ff" opacity=".8"/><path d="M3.9 12.6 H5.6 V15 H3.9Z" fill="#f08a24"/><path d="M14.4 12.6 H16 V15 H14.4Z" fill="#f08a24"/></svg></div>
<div class="t " style="left:1423px;top:478px">0</div>
<div class="c" style="left:294px;top:499px;width:60px;height:25px;background:#f1f1f1"></div>
<div class="c" style="left:356px;top:499px;width:63px;height:25px;background:#f1f1f1"></div>
<div class="c" style="left:421px;top:499px;width:78px;height:25px;background:#f1f1f1"></div>
<div class="c" style="left:501px;top:499px;width:231px;height:25px;background:#f1f1f1"></div>
<div class="c" style="left:734px;top:499px;width:135px;height:25px;background:#bbde6e"></div>
<div class="c" style="left:871px;top:499px;width:99px;height:25px;background:#ddedc1"></div>
<div class="c" style="left:972px;top:499px;width:104px;height:25px;background:#f1f1f1"></div>
<div class="c" style="left:1078px;top:499px;width:175px;height:25px;background:#f1f1f1"></div>
<div class="c" style="left:1255px;top:499px;width:99px;height:25px;background:#f6d193"></div>
<div class="c" style="left:1356px;top:499px;width:120px;height:25px;background:#f1f1f1"></div>
<div class="t " style="left:294px;top:505px;width:60px;text-align:center"></div>
<div class="t gr" style="left:356px;top:505px;width:63px;text-align:center">2961</div>
<div class="ell" style="left:517px;top:506px"></div>
<div class="t " style="left:531px;top:505px">R2_20_<span class="j">カラス２</span></div>
<div class="d" style="left:852px;top:512px"></div><div class="d" style="left:857px;top:512px"></div>
<div class="d" style="left:953px;top:512px"></div><div class="d" style="left:958px;top:512px"></div>
<div class="i" style="left:1025px;top:504px"><svg width="16" height="16" viewBox="0 0 16 16"><path d="M8 8 L0.3 8 A7.7 7.7 0 0 1 13.83 2.97 Z" fill="#a8c9fd" stroke="#2f4fd0" stroke-width="1"/><path d="M8 8 L13.83 2.97 A7.7 7.7 0 0 1 11.31 14.95 Z" fill="#a6f7a0" stroke="#2ea02e" stroke-width="1"/><path d="M8 8 L11.31 14.95 A7.7 7.7 0 0 1 0.3 8 Z" fill="#feb0a8" stroke="#c83a3a" stroke-width="1"/><path d="M8 8 L13.83 2.97" stroke="#2f4fd0" stroke-width="1"/></svg></div>
<div class="d" style="left:1059px;top:511px"></div><div class="d" style="left:1064px;top:511px"></div>
<div class="d" style="left:1236px;top:512px"></div><div class="d" style="left:1241px;top:512px"></div>
<div class="d" style="left:1337px;top:512px"></div><div class="d" style="left:1342px;top:512px"></div>
<div class="i" style="left:1394px;top:504px"><svg width="16" height="16" viewBox="0 0 16 16"><path d="M1.8 8.6 Q1.4 0 6 0 Q10.2 0 9.8 5.6 L8.6 6.4 L3.6 6.6 L3.4 8.8 Z" fill="#a4541c"/><ellipse cx="6.1" cy="4.5" rx="2.7" ry="2.1" fill="#fcd9b0"/><path d="M3.4 3.2 Q6 1.2 8.8 3.4 Q8.6 1.2 6 1.1 Q3.6 1.2 3.4 3.2Z" fill="#a4541c"/><path d="M0.4 8.8 L3 6.5 L6.4 6.6 L6.8 11.6 L1.4 11.8 Z" fill="#ee74b0"/><path d="M3.6 7.4 L5.8 7.4 L6 9.6 L3.8 9.4Z" fill="#ff9ccc"/><path d="M0 8.6 L1.4 8.4 L1.6 10.8 L0.2 10.8Z" fill="#eea060"/><path d="M6.7 8.8 Q6.4 3.8 10.4 3.8 Q14.4 3.8 14.1 8.8 Z" fill="#9c521e"/><ellipse cx="10.4" cy="8.1" rx="3.1" ry="2.4" fill="#fcd6ad"/><path d="M7.3 6.8 Q10.4 4.6 13.5 6.8 Q13 4.6 10.4 4.5 Q7.8 4.6 7.3 6.8Z" fill="#9c521e"/><path d="M4.3 13 L5.6 10.8 L7.6 9.8 L13.2 9.8 L15.2 10.8 L16 13 L14 13.4 L13.8 16 L6.4 16 L6.2 13.4 Z" fill="#3c64cc"/><path d="M6.8 11 L8.2 10.4 L12.6 10.4 L14 11 L13.4 15.4 L7.2 15.4 Z" fill="#4aa2fa"/><path d="M8 11.6 H12.8 V13 H8Z" fill="#7cc8ff" opacity=".8"/><path d="M3.9 12.6 H5.6 V15 H3.9Z" fill="#f08a24"/><path d="M14.4 12.6 H16 V15 H14.4Z" fill="#f08a24"/></svg></div>
<div class="t " style="left:1423px;top:505px">0</div>
<div class="c" style="left:294px;top:526px;width:60px;height:25px;background:#fff"></div>
<div class="c" style="left:356px;top:526px;width:63px;height:25px;background:#fff"></div>
<div class="c" style="left:421px;top:526px;width:78px;height:25px;background:#fff"></div>
<div class="c" style="left:501px;top:526px;width:231px;height:25px;background:#fff"></div>
<div class="c" style="left:734px;top:526px;width:135px;height:25px;background:#bbde6e"></div>
<div class="c" style="left:871px;top:526px;width:99px;height:25px;background:#ddedc1"></div>
<div class="c" style="left:972px;top:526px;width:104px;height:25px;background:#fff"></div>
<div class="c" style="left:1078px;top:526px;width:175px;height:25px;background:#fff"></div>
<div class="c" style="left:1255px;top:526px;width:99px;height:25px;background:#f6d193"></div>
<div class="c" style="left:1356px;top:526px;width:120px;height:25px;background:#fff"></div>
<div class="t " style="left:294px;top:532px;width:60px;text-align:center"></div>
<div class="t gr" style="left:356px;top:532px;width:63px;text-align:center">2960</div>
<div class="ell" style="left:517px;top:533px"></div>
<div class="t " style="left:531px;top:532px">R3_3_<span class="j">黒人の北方移動</span></div>
<div class="d" style="left:852px;top:539px"></div><div class="d" style="left:857px;top:539px"></div>
<div class="d" style="left:953px;top:539px"></div><div class="d" style="left:958px;top:539px"></div>
<div class="i" style="left:1025px;top:531px"><svg width="16" height="16" viewBox="0 0 16 16"><path d="M8 8 L0.3 8 A7.7 7.7 0 0 1 13.83 2.97 Z" fill="#a8c9fd" stroke="#2f4fd0" stroke-width="1"/><path d="M8 8 L13.83 2.97 A7.7 7.7 0 0 1 11.31 14.95 Z" fill="#a6f7a0" stroke="#2ea02e" stroke-width="1"/><path d="M8 8 L11.31 14.95 A7.7 7.7 0 0 1 0.3 8 Z" fill="#feb0a8" stroke="#c83a3a" stroke-width="1"/><path d="M8 8 L13.83 2.97" stroke="#2f4fd0" stroke-width="1"/></svg></div>
<div class="d" style="left:1059px;top:538px"></div><div class="d" style="left:1064px;top:538px"></div>
<div class="d" style="left:1236px;top:539px"></div><div class="d" style="left:1241px;top:539px"></div>
<div class="d" style="left:1337px;top:539px"></div><div class="d" style="left:1342px;top:539px"></div>
<div class="i" style="left:1394px;top:531px"><svg width="16" height="16" viewBox="0 0 16 16"><path d="M1.8 8.6 Q1.4 0 6 0 Q10.2 0 9.8 5.6 L8.6 6.4 L3.6 6.6 L3.4 8.8 Z" fill="#a4541c"/><ellipse cx="6.1" cy="4.5" rx="2.7" ry="2.1" fill="#fcd9b0"/><path d="M3.4 3.2 Q6 1.2 8.8 3.4 Q8.6 1.2 6 1.1 Q3.6 1.2 3.4 3.2Z" fill="#a4541c"/><path d="M0.4 8.8 L3 6.5 L6.4 6.6 L6.8 11.6 L1.4 11.8 Z" fill="#ee74b0"/><path d="M3.6 7.4 L5.8 7.4 L6 9.6 L3.8 9.4Z" fill="#ff9ccc"/><path d="M0 8.6 L1.4 8.4 L1.6 10.8 L0.2 10.8Z" fill="#eea060"/><path d="M6.7 8.8 Q6.4 3.8 10.4 3.8 Q14.4 3.8 14.1 8.8 Z" fill="#9c521e"/><ellipse cx="10.4" cy="8.1" rx="3.1" ry="2.4" fill="#fcd6ad"/><path d="M7.3 6.8 Q10.4 4.6 13.5 6.8 Q13 4.6 10.4 4.5 Q7.8 4.6 7.3 6.8Z" fill="#9c521e"/><path d="M4.3 13 L5.6 10.8 L7.6 9.8 L13.2 9.8 L15.2 10.8 L16 13 L14 13.4 L13.8 16 L6.4 16 L6.2 13.4 Z" fill="#3c64cc"/><path d="M6.8 11 L8.2 10.4 L12.6 10.4 L14 11 L13.4 15.4 L7.2 15.4 Z" fill="#4aa2fa"/><path d="M8 11.6 H12.8 V13 H8Z" fill="#7cc8ff" opacity=".8"/><path d="M3.9 12.6 H5.6 V15 H3.9Z" fill="#f08a24"/><path d="M14.4 12.6 H16 V15 H14.4Z" fill="#f08a24"/></svg></div>
<div class="t " style="left:1423px;top:532px">0</div>
<div class="c" style="left:294px;top:553px;width:60px;height:25px;background:#f1f1f1"></div>
<div class="c" style="left:356px;top:553px;width:63px;height:25px;background:#f1f1f1"></div>
<div class="c" style="left:421px;top:553px;width:78px;height:25px;background:#f1f1f1"></div>
<div class="c" style="left:501px;top:553px;width:231px;height:25px;background:#f1f1f1"></div>
<div class="c" style="left:734px;top:553px;width:135px;height:25px;background:#bbde6e"></div>
<div class="c" style="left:871px;top:553px;width:99px;height:25px;background:#ddedc1"></div>
<div class="c" style="left:972px;top:553px;width:104px;height:25px;background:#f1f1f1"></div>
<div class="c" style="left:1078px;top:553px;width:175px;height:25px;background:#f1f1f1"></div>
<div class="c" style="left:1255px;top:553px;width:99px;height:25px;background:#f6d193"></div>
<div class="c" style="left:1356px;top:553px;width:120px;height:25px;background:#f1f1f1"></div>
<div class="t " style="left:294px;top:559px;width:60px;text-align:center"></div>
<div class="t gr" style="left:356px;top:559px;width:63px;text-align:center">2959</div>
<div class="ell" style="left:517px;top:560px"></div>
<div class="t " style="left:531px;top:559px">R3_4_<span class="j">円安</span></div>
<div class="d" style="left:852px;top:566px"></div><div class="d" style="left:857px;top:566px"></div>
<div class="d" style="left:953px;top:566px"></div><div class="d" style="left:958px;top:566px"></div>
<div class="i" style="left:1025px;top:558px"><svg width="16" height="16" viewBox="0 0 16 16"><path d="M8 8 L0.3 8 A7.7 7.7 0 0 1 13.83 2.97 Z" fill="#a8c9fd" stroke="#2f4fd0" stroke-width="1"/><path d="M8 8 L13.83 2.97 A7.7 7.7 0 0 1 11.31 14.95 Z" fill="#a6f7a0" stroke="#2ea02e" stroke-width="1"/><path d="M8 8 L11.31 14.95 A7.7 7.7 0 0 1 0.3 8 Z" fill="#feb0a8" stroke="#c83a3a" stroke-width="1"/><path d="M8 8 L13.83 2.97" stroke="#2f4fd0" stroke-width="1"/></svg></div>
<div class="d" style="left:1059px;top:565px"></div><div class="d" style="left:1064px;top:565px"></div>
<div class="d" style="left:1236px;top:566px"></div><div class="d" style="left:1241px;top:566px"></div>
<div class="d" style="left:1337px;top:566px"></div><div class="d" style="left:1342px;top:566px"></div>
<div class="i" style="left:1394px;top:558px"><svg width="16" height="16" viewBox="0 0 16 16"><path d="M1.8 8.6 Q1.4 0 6 0 Q10.2 0 9.8 5.6 L8.6 6.4 L3.6 6.6 L3.4 8.8 Z" fill="#a4541c"/><ellipse cx="6.1" cy="4.5" rx="2.7" ry="2.1" fill="#fcd9b0"/><path d="M3.4 3.2 Q6 1.2 8.8 3.4 Q8.6 1.2 6 1.1 Q3.6 1.2 3.4 3.2Z" fill="#a4541c"/><path d="M0.4 8.8 L3 6.5 L6.4 6.6 L6.8 11.6 L1.4 11.8 Z" fill="#ee74b0"/><path d="M3.6 7.4 L5.8 7.4 L6 9.6 L3.8 9.4Z" fill="#ff9ccc"/><path d="M0 8.6 L1.4 8.4 L1.6 10.8 L0.2 10.8Z" fill="#eea060"/><path d="M6.7 8.8 Q6.4 3.8 10.4 3.8 Q14.4 3.8 14.1 8.8 Z" fill="#9c521e"/><ellipse cx="10.4" cy="8.1" rx="3.1" ry="2.4" fill="#fcd6ad"/><path d="M7.3 6.8 Q10.4 4.6 13.5 6.8 Q13 4.6 10.4 4.5 Q7.8 4.6 7.3 6.8Z" fill="#9c521e"/><path d="M4.3 13 L5.6 10.8 L7.6 9.8 L13.2 9.8 L15.2 10.8 L16 13 L14 13.4 L13.8 16 L6.4 16 L6.2 13.4 Z" fill="#3c64cc"/><path d="M6.8 11 L8.2 10.4 L12.6 10.4 L14 11 L13.4 15.4 L7.2 15.4 Z" fill="#4aa2fa"/><path d="M8 11.6 H12.8 V13 H8Z" fill="#7cc8ff" opacity=".8"/><path d="M3.9 12.6 H5.6 V15 H3.9Z" fill="#f08a24"/><path d="M14.4 12.6 H16 V15 H14.4Z" fill="#f08a24"/></svg></div>
<div class="t " style="left:1423px;top:559px">0</div>
<div class="c" style="left:294px;top:580px;width:60px;height:26px;background:#fff"></div>
<div class="c" style="left:356px;top:580px;width:63px;height:26px;background:#fff"></div>
<div class="c" style="left:421px;top:580px;width:78px;height:26px;background:#fff"></div>
<div class="c" style="left:501px;top:580px;width:231px;height:26px;background:#fff"></div>
<div class="c" style="left:734px;top:580px;width:135px;height:26px;background:#bbde6e"></div>
<div class="c" style="left:871px;top:580px;width:99px;height:26px;background:#ddedc1"></div>
<div class="c" style="left:972px;top:580px;width:104px;height:26px;background:#fff"></div>
<div class="c" style="left:1078px;top:580px;width:175px;height:26px;background:#fff"></div>
<div class="c" style="left:1255px;top:580px;width:99px;height:26px;background:#f6d193"></div>
<div class="c" style="left:1356px;top:580px;width:120px;height:26px;background:#fff"></div>
<div class="t " style="left:294px;top:586px;width:60px;text-align:center">0</div>
<div class="t " style="left:356px;top:586px;width:63px;text-align:center">2956</div>
<div class="i" style="left:507px;top:586px;width:12px"><svg width="12" height="16" viewBox="0 0 12 16"><path d="M0.6 0.6 H8.4 L11.4 3.6 V15.4 H0.6 Z" fill="#eef4f4" stroke="#7a8888" stroke-width="1.1"/><path d="M8.4 0.6 V3.6 H11.4" fill="#fff" stroke="#7a8888" stroke-width="0.8"/><rect x="2" y="4" width="1.3" height="1.3" fill="#2a2"/><rect x="2" y="6" width="1.3" height="1.3" fill="#c55"/><rect x="2" y="8" width="1.3" height="1.3" fill="#46e"/><rect x="2" y="10" width="1.3" height="1.3" fill="#444"/><rect x="2" y="12" width="1.3" height="1.3" fill="#46e"/><path d="M4 4.6H7M4 6.6H9M4 8.6H8M4 10.6H9M4 12.6H7" stroke="#d0d8d8" stroke-width="0.9"/></svg></div>
<div class="t red" style="left:525px;top:586px">Reading6</div>
<div class="d" style="left:852px;top:593px"></div><div class="d" style="left:851px;top:593px;width:1px;opacity:.5"></div><div class="d" style="left:857px;top:593px"></div><div class="d" style="left:856px;top:593px;width:1px;opacity:.5"></div>
<div class="d" style="left:953px;top:593px"></div><div class="d" style="left:952px;top:593px;width:1px;opacity:.5"></div><div class="d" style="left:958px;top:593px"></div><div class="d" style="left:957px;top:593px;width:1px;opacity:.5"></div>
<div class="i" style="left:1024px;top:586px"><svg width="16" height="16" viewBox="0 0 16 16"><path d="M8 8 L0.3 8 A7.7 7.7 0 0 1 13.83 2.97 Z" fill="#a8c9fd" stroke="#2f4fd0" stroke-width="1"/><path d="M8 8 L13.83 2.97 A7.7 7.7 0 0 1 11.31 14.95 Z" fill="#a6f7a0" stroke="#2ea02e" stroke-width="1"/><path d="M8 8 L11.31 14.95 A7.7 7.7 0 0 1 0.3 8 Z" fill="#feb0a8" stroke="#c83a3a" stroke-width="1"/><path d="M8 8 L13.83 2.97" stroke="#2f4fd0" stroke-width="1"/></svg></div>
<div class="d" style="left:1059px;top:593px"></div><div class="d" style="left:1058px;top:593px;width:1px;opacity:.5"></div><div class="d" style="left:1064px;top:593px"></div><div class="d" style="left:1063px;top:593px;width:1px;opacity:.5"></div>
<div class="d" style="left:1236px;top:593px"></div><div class="d" style="left:1235px;top:593px;width:1px;opacity:.5"></div><div class="d" style="left:1241px;top:593px"></div><div class="d" style="left:1240px;top:593px;width:1px;opacity:.5"></div>
<div class="d" style="left:1337px;top:593px"></div><div class="d" style="left:1336px;top:593px;width:1px;opacity:.5"></div><div class="d" style="left:1342px;top:593px"></div><div class="d" style="left:1341px;top:593px;width:1px;opacity:.5"></div>
<div class="i" style="left:1394px;top:586px"><svg width="16" height="16" viewBox="0 0 16 16"><path d="M1.8 8.6 Q1.4 0 6 0 Q10.2 0 9.8 5.6 L8.6 6.4 L3.6 6.6 L3.4 8.8 Z" fill="#a4541c"/><ellipse cx="6.1" cy="4.5" rx="2.7" ry="2.1" fill="#fcd9b0"/><path d="M3.4 3.2 Q6 1.2 8.8 3.4 Q8.6 1.2 6 1.1 Q3.6 1.2 3.4 3.2Z" fill="#a4541c"/><path d="M0.4 8.8 L3 6.5 L6.4 6.6 L6.8 11.6 L1.4 11.8 Z" fill="#ee74b0"/><path d="M3.6 7.4 L5.8 7.4 L6 9.6 L3.8 9.4Z" fill="#ff9ccc"/><path d="M0 8.6 L1.4 8.4 L1.6 10.8 L0.2 10.8Z" fill="#eea060"/><path d="M6.7 8.8 Q6.4 3.8 10.4 3.8 Q14.4 3.8 14.1 8.8 Z" fill="#9c521e"/><ellipse cx="10.4" cy="8.1" rx="3.1" ry="2.4" fill="#fcd6ad"/><path d="M7.3 6.8 Q10.4 4.6 13.5 6.8 Q13 4.6 10.4 4.5 Q7.8 4.6 7.3 6.8Z" fill="#9c521e"/><path d="M4.3 13 L5.6 10.8 L7.6 9.8 L13.2 9.8 L15.2 10.8 L16 13 L14 13.4 L13.8 16 L6.4 16 L6.2 13.4 Z" fill="#3c64cc"/><path d="M6.8 11 L8.2 10.4 L12.6 10.4 L14 11 L13.4 15.4 L7.2 15.4 Z" fill="#4aa2fa"/><path d="M8 11.6 H12.8 V13 H8Z" fill="#7cc8ff" opacity=".8"/><path d="M3.9 12.6 H5.6 V15 H3.9Z" fill="#f08a24"/><path d="M14.4 12.6 H16 V15 H14.4Z" fill="#f08a24"/></svg></div>
<div class="t b" style="left:1419px;top:586px">0</div>
<div class="c" style="left:294px;top:608px;width:60px;height:25px;background:#f1f1f1"></div>
<div class="c" style="left:356px;top:608px;width:63px;height:25px;background:#f1f1f1"></div>
<div class="c" style="left:421px;top:608px;width:78px;height:25px;background:#f1f1f1"></div>
<div class="c" style="left:501px;top:608px;width:231px;height:25px;background:#f1f1f1"></div>
<div class="c" style="left:734px;top:608px;width:135px;height:25px;background:#bbde6e"></div>
<div class="c" style="left:871px;top:608px;width:99px;height:25px;background:#ddedc1"></div>
<div class="c" style="left:972px;top:608px;width:104px;height:25px;background:#f1f1f1"></div>
<div class="c" style="left:1078px;top:608px;width:175px;height:25px;background:#f1f1f1"></div>
<div class="c" style="left:1255px;top:608px;width:99px;height:25px;background:#f6d193"></div>
<div class="c" style="left:1356px;top:608px;width:120px;height:25px;background:#f1f1f1"></div>
<div class="t " style="left:294px;top:614px;width:60px;text-align:center"></div>
<div class="t gr" style="left:356px;top:614px;width:63px;text-align:center">2955</div>
<div class="ell" style="left:517px;top:615px"></div>
<div class="t " style="left:531px;top:614px">Home</div>
<div class="d" style="left:852px;top:621px"></div><div class="d" style="left:857px;top:621px"></div>
<div class="d" style="left:953px;top:621px"></div><div class="d" style="left:958px;top:621px"></div>
<div class="i" style="left:1025px;top:613px"><svg width="16" height="16" viewBox="0 0 16 16"><path d="M8 8 L0.3 8 A7.7 7.7 0 0 1 13.83 2.97 Z" fill="#a8c9fd" stroke="#2f4fd0" stroke-width="1"/><path d="M8 8 L13.83 2.97 A7.7 7.7 0 0 1 11.31 14.95 Z" fill="#a6f7a0" stroke="#2ea02e" stroke-width="1"/><path d="M8 8 L11.31 14.95 A7.7 7.7 0 0 1 0.3 8 Z" fill="#feb0a8" stroke="#c83a3a" stroke-width="1"/><path d="M8 8 L13.83 2.97" stroke="#2f4fd0" stroke-width="1"/></svg></div>
<div class="d" style="left:1059px;top:620px"></div><div class="d" style="left:1064px;top:620px"></div>
<div class="d" style="left:1236px;top:621px"></div><div class="d" style="left:1241px;top:621px"></div>
<div class="d" style="left:1337px;top:621px"></div><div class="d" style="left:1342px;top:621px"></div>
<div class="i" style="left:1394px;top:613px"><svg width="16" height="16" viewBox="0 0 16 16"><path d="M1.8 8.6 Q1.4 0 6 0 Q10.2 0 9.8 5.6 L8.6 6.4 L3.6 6.6 L3.4 8.8 Z" fill="#a4541c"/><ellipse cx="6.1" cy="4.5" rx="2.7" ry="2.1" fill="#fcd9b0"/><path d="M3.4 3.2 Q6 1.2 8.8 3.4 Q8.6 1.2 6 1.1 Q3.6 1.2 3.4 3.2Z" fill="#a4541c"/><path d="M0.4 8.8 L3 6.5 L6.4 6.6 L6.8 11.6 L1.4 11.8 Z" fill="#ee74b0"/><path d="M3.6 7.4 L5.8 7.4 L6 9.6 L3.8 9.4Z" fill="#ff9ccc"/><path d="M0 8.6 L1.4 8.4 L1.6 10.8 L0.2 10.8Z" fill="#eea060"/><path d="M6.7 8.8 Q6.4 3.8 10.4 3.8 Q14.4 3.8 14.1 8.8 Z" fill="#9c521e"/><ellipse cx="10.4" cy="8.1" rx="3.1" ry="2.4" fill="#fcd6ad"/><path d="M7.3 6.8 Q10.4 4.6 13.5 6.8 Q13 4.6 10.4 4.5 Q7.8 4.6 7.3 6.8Z" fill="#9c521e"/><path d="M4.3 13 L5.6 10.8 L7.6 9.8 L13.2 9.8 L15.2 10.8 L16 13 L14 13.4 L13.8 16 L6.4 16 L6.2 13.4 Z" fill="#3c64cc"/><path d="M6.8 11 L8.2 10.4 L12.6 10.4 L14 11 L13.4 15.4 L7.2 15.4 Z" fill="#4aa2fa"/><path d="M8 11.6 H12.8 V13 H8Z" fill="#7cc8ff" opacity=".8"/><path d="M3.9 12.6 H5.6 V15 H3.9Z" fill="#f08a24"/><path d="M14.4 12.6 H16 V15 H14.4Z" fill="#f08a24"/></svg></div>
<div class="t " style="left:1423px;top:614px">0</div>
<div class="c" style="left:294px;top:635px;width:60px;height:25px;background:#fff"></div>
<div class="c" style="left:356px;top:635px;width:63px;height:25px;background:#fff"></div>
<div class="c" style="left:421px;top:635px;width:78px;height:25px;background:#fff"></div>
<div class="c" style="left:501px;top:635px;width:231px;height:25px;background:#fff"></div>
<div class="c" style="left:734px;top:635px;width:135px;height:25px;background:#bbde6e"></div>
<div class="c" style="left:871px;top:635px;width:99px;height:25px;background:#ddedc1"></div>
<div class="c" style="left:972px;top:635px;width:104px;height:25px;background:#fff"></div>
<div class="c" style="left:1078px;top:635px;width:175px;height:25px;background:#fff"></div>
<div class="c" style="left:1255px;top:635px;width:99px;height:25px;background:#f6d193"></div>
<div class="c" style="left:1356px;top:635px;width:120px;height:25px;background:#fff"></div>
<div class="t " style="left:294px;top:641px;width:60px;text-align:center"></div>
<div class="t gr" style="left:356px;top:641px;width:63px;text-align:center">2953</div>
<div class="ell" style="left:517px;top:642px"></div>
<div class="t " style="left:531px;top:641px">R2_10_<span class="j">イングランドの教師の性別</span></div>
<div class="d" style="left:852px;top:648px"></div><div class="d" style="left:857px;top:648px"></div>
<div class="d" style="left:953px;top:648px"></div><div class="d" style="left:958px;top:648px"></div>
<div class="i" style="left:1025px;top:640px"><svg width="16" height="16" viewBox="0 0 16 16"><path d="M8 8 L0.3 8 A7.7 7.7 0 0 1 13.83 2.97 Z" fill="#a8c9fd" stroke="#2f4fd0" stroke-width="1"/><path d="M8 8 L13.83 2.97 A7.7 7.7 0 0 1 11.31 14.95 Z" fill="#a6f7a0" stroke="#2ea02e" stroke-width="1"/><path d="M8 8 L11.31 14.95 A7.7 7.7 0 0 1 0.3 8 Z" fill="#feb0a8" stroke="#c83a3a" stroke-width="1"/><path d="M8 8 L13.83 2.97" stroke="#2f4fd0" stroke-width="1"/></svg></div>
<div class="d" style="left:1059px;top:647px"></div><div class="d" style="left:1064px;top:647px"></div>
<div class="d" style="left:1236px;top:648px"></div><div class="d" style="left:1241px;top:648px"></div>
<div class="d" style="left:1337px;top:648px"></div><div class="d" style="left:1342px;top:648px"></div>
<div class="i" style="left:1394px;top:640px"><svg width="16" height="16" viewBox="0 0 16 16"><path d="M1.8 8.6 Q1.4 0 6 0 Q10.2 0 9.8 5.6 L8.6 6.4 L3.6 6.6 L3.4 8.8 Z" fill="#a4541c"/><ellipse cx="6.1" cy="4.5" rx="2.7" ry="2.1" fill="#fcd9b0"/><path d="M3.4 3.2 Q6 1.2 8.8 3.4 Q8.6 1.2 6 1.1 Q3.6 1.2 3.4 3.2Z" fill="#a4541c"/><path d="M0.4 8.8 L3 6.5 L6.4 6.6 L6.8 11.6 L1.4 11.8 Z" fill="#ee74b0"/><path d="M3.6 7.4 L5.8 7.4 L6 9.6 L3.8 9.4Z" fill="#ff9ccc"/><path d="M0 8.6 L1.4 8.4 L1.6 10.8 L0.2 10.8Z" fill="#eea060"/><path d="M6.7 8.8 Q6.4 3.8 10.4 3.8 Q14.4 3.8 14.1 8.8 Z" fill="#9c521e"/><ellipse cx="10.4" cy="8.1" rx="3.1" ry="2.4" fill="#fcd6ad"/><path d="M7.3 6.8 Q10.4 4.6 13.5 6.8 Q13 4.6 10.4 4.5 Q7.8 4.6 7.3 6.8Z" fill="#9c521e"/><path d="M4.3 13 L5.6 10.8 L7.6 9.8 L13.2 9.8 L15.2 10.8 L16 13 L14 13.4 L13.8 16 L6.4 16 L6.2 13.4 Z" fill="#3c64cc"/><path d="M6.8 11 L8.2 10.4 L12.6 10.4 L14 11 L13.4 15.4 L7.2 15.4 Z" fill="#4aa2fa"/><path d="M8 11.6 H12.8 V13 H8Z" fill="#7cc8ff" opacity=".8"/><path d="M3.9 12.6 H5.6 V15 H3.9Z" fill="#f08a24"/><path d="M14.4 12.6 H16 V15 H14.4Z" fill="#f08a24"/></svg></div>
<div class="t " style="left:1423px;top:641px">0</div>
<div class="c" style="left:294px;top:662px;width:60px;height:25px;background:#f1f1f1"></div>
<div class="c" style="left:356px;top:662px;width:63px;height:25px;background:#f1f1f1"></div>
<div class="c" style="left:421px;top:662px;width:78px;height:25px;background:#f1f1f1"></div>
<div class="c" style="left:501px;top:662px;width:231px;height:25px;background:#f1f1f1"></div>
<div class="c" style="left:734px;top:662px;width:135px;height:25px;background:#bbde6e"></div>
<div class="c" style="left:871px;top:662px;width:99px;height:25px;background:#ddedc1"></div>
<div class="c" style="left:972px;top:662px;width:104px;height:25px;background:#f1f1f1"></div>
<div class="c" style="left:1078px;top:662px;width:175px;height:25px;background:#f1f1f1"></div>
<div class="c" style="left:1255px;top:662px;width:99px;height:25px;background:#f6d193"></div>
<div class="c" style="left:1356px;top:662px;width:120px;height:25px;background:#f1f1f1"></div>
<div class="t " style="left:294px;top:668px;width:60px;text-align:center"></div>
<div class="t gr" style="left:356px;top:668px;width:63px;text-align:center">2952</div>
<div class="ell" style="left:517px;top:669px"></div>
<div class="t " style="left:531px;top:668px">R2_11_<span class="j">冷凍精子</span></div>
<div class="d" style="left:852px;top:675px"></div><div class="d" style="left:857px;top:675px"></div>
<div class="d" style="left:953px;top:675px"></div><div class="d" style="left:958px;top:675px"></div>
<div class="i" style="left:1025px;top:667px"><svg width="16" height="16" viewBox="0 0 16 16"><path d="M8 8 L0.3 8 A7.7 7.7 0 0 1 13.83 2.97 Z" fill="#a8c9fd" stroke="#2f4fd0" stroke-width="1"/><path d="M8 8 L13.83 2.97 A7.7 7.7 0 0 1 11.31 14.95 Z" fill="#a6f7a0" stroke="#2ea02e" stroke-width="1"/><path d="M8 8 L11.31 14.95 A7.7 7.7 0 0 1 0.3 8 Z" fill="#feb0a8" stroke="#c83a3a" stroke-width="1"/><path d="M8 8 L13.83 2.97" stroke="#2f4fd0" stroke-width="1"/></svg></div>
<div class="d" style="left:1059px;top:674px"></div><div class="d" style="left:1064px;top:674px"></div>
<div class="d" style="left:1236px;top:675px"></div><div class="d" style="left:1241px;top:675px"></div>
<div class="d" style="left:1337px;top:675px"></div><div class="d" style="left:1342px;top:675px"></div>
<div class="i" style="left:1394px;top:667px"><svg width="16" height="16" viewBox="0 0 16 16"><path d="M1.8 8.6 Q1.4 0 6 0 Q10.2 0 9.8 5.6 L8.6 6.4 L3.6 6.6 L3.4 8.8 Z" fill="#a4541c"/><ellipse cx="6.1" cy="4.5" rx="2.7" ry="2.1" fill="#fcd9b0"/><path d="M3.4 3.2 Q6 1.2 8.8 3.4 Q8.6 1.2 6 1.1 Q3.6 1.2 3.4 3.2Z" fill="#a4541c"/><path d="M0.4 8.8 L3 6.5 L6.4 6.6 L6.8 11.6 L1.4 11.8 Z" fill="#ee74b0"/><path d="M3.6 7.4 L5.8 7.4 L6 9.6 L3.8 9.4Z" fill="#ff9ccc"/><path d="M0 8.6 L1.4 8.4 L1.6 10.8 L0.2 10.8Z" fill="#eea060"/><path d="M6.7 8.8 Q6.4 3.8 10.4 3.8 Q14.4 3.8 14.1 8.8 Z" fill="#9c521e"/><ellipse cx="10.4" cy="8.1" rx="3.1" ry="2.4" fill="#fcd6ad"/><path d="M7.3 6.8 Q10.4 4.6 13.5 6.8 Q13 4.6 10.4 4.5 Q7.8 4.6 7.3 6.8Z" fill="#9c521e"/><path d="M4.3 13 L5.6 10.8 L7.6 9.8 L13.2 9.8 L15.2 10.8 L16 13 L14 13.4 L13.8 16 L6.4 16 L6.2 13.4 Z" fill="#3c64cc"/><path d="M6.8 11 L8.2 10.4 L12.6 10.4 L14 11 L13.4 15.4 L7.2 15.4 Z" fill="#4aa2fa"/><path d="M8 11.6 H12.8 V13 H8Z" fill="#7cc8ff" opacity=".8"/><path d="M3.9 12.6 H5.6 V15 H3.9Z" fill="#f08a24"/><path d="M14.4 12.6 H16 V15 H14.4Z" fill="#f08a24"/></svg></div>
<div class="t " style="left:1423px;top:668px">0</div>
<div class="c" style="left:294px;top:689px;width:60px;height:25px;background:#fff"></div>
<div class="c" style="left:356px;top:689px;width:63px;height:25px;background:#fff"></div>
<div class="c" style="left:421px;top:689px;width:78px;height:25px;background:#fff"></div>
<div class="c" style="left:501px;top:689px;width:231px;height:25px;background:#fff"></div>
<div class="c" style="left:734px;top:689px;width:135px;height:25px;background:#bbde6e"></div>
<div class="c" style="left:871px;top:689px;width:99px;height:25px;background:#ddedc1"></div>
<div class="c" style="left:972px;top:689px;width:104px;height:25px;background:#fff"></div>
<div class="c" style="left:1078px;top:689px;width:175px;height:25px;background:#fff"></div>
<div class="c" style="left:1255px;top:689px;width:99px;height:25px;background:#f6d193"></div>
<div class="c" style="left:1356px;top:689px;width:120px;height:25px;background:#fff"></div>
<div class="t " style="left:294px;top:695px;width:60px;text-align:center"></div>
<div class="t gr" style="left:356px;top:695px;width:63px;text-align:center">2951</div>
<div class="ell" style="left:517px;top:696px"></div>
<div class="t " style="left:531px;top:695px">R2_12_<span class="j">臓器提供</span></div>
<div class="d" style="left:852px;top:702px"></div><div class="d" style="left:857px;top:702px"></div>
<div class="d" style="left:953px;top:702px"></div><div class="d" style="left:958px;top:702px"></div>
<div class="i" style="left:1025px;top:694px"><svg width="16" height="16" viewBox="0 0 16 16"><path d="M8 8 L0.3 8 A7.7 7.7 0 0 1 13.83 2.97 Z" fill="#a8c9fd" stroke="#2f4fd0" stroke-width="1"/><path d="M8 8 L13.83 2.97 A7.7 7.7 0 0 1 11.31 14.95 Z" fill="#a6f7a0" stroke="#2ea02e" stroke-width="1"/><path d="M8 8 L11.31 14.95 A7.7 7.7 0 0 1 0.3 8 Z" fill="#feb0a8" stroke="#c83a3a" stroke-width="1"/><path d="M8 8 L13.83 2.97" stroke="#2f4fd0" stroke-width="1"/></svg></div>
<div class="d" style="left:1059px;top:701px"></div><div class="d" style="left:1064px;top:701px"></div>
<div class="d" style="left:1236px;top:702px"></div><div class="d" style="left:1241px;top:702px"></div>
<div class="d" style="left:1337px;top:702px"></div><div class="d" style="left:1342px;top:702px"></div>
<div class="i" style="left:1394px;top:694px"><svg width="16" height="16" viewBox="0 0 16 16"><path d="M1.8 8.6 Q1.4 0 6 0 Q10.2 0 9.8 5.6 L8.6 6.4 L3.6 6.6 L3.4 8.8 Z" fill="#a4541c"/><ellipse cx="6.1" cy="4.5" rx="2.7" ry="2.1" fill="#fcd9b0"/><path d="M3.4 3.2 Q6 1.2 8.8 3.4 Q8.6 1.2 6 1.1 Q3.6 1.2 3.4 3.2Z" fill="#a4541c"/><path d="M0.4 8.8 L3 6.5 L6.4 6.6 L6.8 11.6 L1.4 11.8 Z" fill="#ee74b0"/><path d="M3.6 7.4 L5.8 7.4 L6 9.6 L3.8 9.4Z" fill="#ff9ccc"/><path d="M0 8.6 L1.4 8.4 L1.6 10.8 L0.2 10.8Z" fill="#eea060"/><path d="M6.7 8.8 Q6.4 3.8 10.4 3.8 Q14.4 3.8 14.1 8.8 Z" fill="#9c521e"/><ellipse cx="10.4" cy="8.1" rx="3.1" ry="2.4" fill="#fcd6ad"/><path d="M7.3 6.8 Q10.4 4.6 13.5 6.8 Q13 4.6 10.4 4.5 Q7.8 4.6 7.3 6.8Z" fill="#9c521e"/><path d="M4.3 13 L5.6 10.8 L7.6 9.8 L13.2 9.8 L15.2 10.8 L16 13 L14 13.4 L13.8 16 L6.4 16 L6.2 13.4 Z" fill="#3c64cc"/><path d="M6.8 11 L8.2 10.4 L12.6 10.4 L14 11 L13.4 15.4 L7.2 15.4 Z" fill="#4aa2fa"/><path d="M8 11.6 H12.8 V13 H8Z" fill="#7cc8ff" opacity=".8"/><path d="M3.9 12.6 H5.6 V15 H3.9Z" fill="#f08a24"/><path d="M14.4 12.6 H16 V15 H14.4Z" fill="#f08a24"/></svg></div>
<div class="t " style="left:1423px;top:695px">0</div>
<div class="c" style="left:294px;top:716px;width:60px;height:25px;background:#f1f1f1"></div>
<div class="c" style="left:356px;top:716px;width:63px;height:25px;background:#f1f1f1"></div>
<div class="c" style="left:421px;top:716px;width:78px;height:25px;background:#f1f1f1"></div>
<div class="c" style="left:501px;top:716px;width:231px;height:25px;background:#f1f1f1"></div>
<div class="c" style="left:734px;top:716px;width:135px;height:25px;background:#bbde6e"></div>
<div class="c" style="left:871px;top:716px;width:99px;height:25px;background:#ddedc1"></div>
<div class="c" style="left:972px;top:716px;width:104px;height:25px;background:#f1f1f1"></div>
<div class="c" style="left:1078px;top:716px;width:175px;height:25px;background:#f1f1f1"></div>
<div class="c" style="left:1255px;top:716px;width:99px;height:25px;background:#f6d193"></div>
<div class="c" style="left:1356px;top:716px;width:120px;height:25px;background:#f1f1f1"></div>
<div class="t " style="left:294px;top:722px;width:60px;text-align:center"></div>
<div class="t gr" style="left:356px;top:722px;width:63px;text-align:center">2950</div>
<div class="ell" style="left:517px;top:723px"></div>
<div class="t " style="left:531px;top:722px">R2_13_<span class="j">逃走開始距離</span></div>
<div class="d" style="left:852px;top:729px"></div><div class="d" style="left:857px;top:729px"></div>
<div class="d" style="left:953px;top:729px"></div><div class="d" style="left:958px;top:729px"></div>
<div class="i" style="left:1025px;top:721px"><svg width="16" height="16" viewBox="0 0 16 16"><path d="M8 8 L0.3 8 A7.7 7.7 0 0 1 13.83 2.97 Z" fill="#a8c9fd" stroke="#2f4fd0" stroke-width="1"/><path d="M8 8 L13.83 2.97 A7.7 7.7 0 0 1 11.31 14.95 Z" fill="#a6f7a0" stroke="#2ea02e" stroke-width="1"/><path d="M8 8 L11.31 14.95 A7.7 7.7 0 0 1 0.3 8 Z" fill="#feb0a8" stroke="#c83a3a" stroke-width="1"/><path d="M8 8 L13.83 2.97" stroke="#2f4fd0" stroke-width="1"/></svg></div>
<div class="d" style="left:1059px;top:728px"></div><div class="d" style="left:1064px;top:728px"></div>
<div class="d" style="left:1236px;top:729px"></div><div class="d" style="left:1241px;top:729px"></div>
<div class="d" style="left:1337px;top:729px"></div><div class="d" style="left:1342px;top:729px"></div>
<div class="i" style="left:1394px;top:721px"><svg width="16" height="16" viewBox="0 0 16 16"><path d="M1.8 8.6 Q1.4 0 6 0 Q10.2 0 9.8 5.6 L8.6 6.4 L3.6 6.6 L3.4 8.8 Z" fill="#a4541c"/><ellipse cx="6.1" cy="4.5" rx="2.7" ry="2.1" fill="#fcd9b0"/><path d="M3.4 3.2 Q6 1.2 8.8 3.4 Q8.6 1.2 6 1.1 Q3.6 1.2 3.4 3.2Z" fill="#a4541c"/><path d="M0.4 8.8 L3 6.5 L6.4 6.6 L6.8 11.6 L1.4 11.8 Z" fill="#ee74b0"/><path d="M3.6 7.4 L5.8 7.4 L6 9.6 L3.8 9.4Z" fill="#ff9ccc"/><path d="M0 8.6 L1.4 8.4 L1.6 10.8 L0.2 10.8Z" fill="#eea060"/><path d="M6.7 8.8 Q6.4 3.8 10.4 3.8 Q14.4 3.8 14.1 8.8 Z" fill="#9c521e"/><ellipse cx="10.4" cy="8.1" rx="3.1" ry="2.4" fill="#fcd6ad"/><path d="M7.3 6.8 Q10.4 4.6 13.5 6.8 Q13 4.6 10.4 4.5 Q7.8 4.6 7.3 6.8Z" fill="#9c521e"/><path d="M4.3 13 L5.6 10.8 L7.6 9.8 L13.2 9.8 L15.2 10.8 L16 13 L14 13.4 L13.8 16 L6.4 16 L6.2 13.4 Z" fill="#3c64cc"/><path d="M6.8 11 L8.2 10.4 L12.6 10.4 L14 11 L13.4 15.4 L7.2 15.4 Z" fill="#4aa2fa"/><path d="M8 11.6 H12.8 V13 H8Z" fill="#7cc8ff" opacity=".8"/><path d="M3.9 12.6 H5.6 V15 H3.9Z" fill="#f08a24"/><path d="M14.4 12.6 H16 V15 H14.4Z" fill="#f08a24"/></svg></div>
<div class="t " style="left:1423px;top:722px">0</div>
<div class="c" style="left:294px;top:743px;width:60px;height:25px;background:#fff"></div>
<div class="c" style="left:356px;top:743px;width:63px;height:25px;background:#fff"></div>
<div class="c" style="left:421px;top:743px;width:78px;height:25px;background:#fff"></div>
<div class="c" style="left:501px;top:743px;width:231px;height:25px;background:#fff"></div>
<div class="c" style="left:734px;top:743px;width:135px;height:25px;background:#bbde6e"></div>
<div class="c" style="left:871px;top:743px;width:99px;height:25px;background:#ddedc1"></div>
<div class="c" style="left:972px;top:743px;width:104px;height:25px;background:#fff"></div>
<div class="c" style="left:1078px;top:743px;width:175px;height:25px;background:#fff"></div>
<div class="c" style="left:1255px;top:743px;width:99px;height:25px;background:#f6d193"></div>
<div class="c" style="left:1356px;top:743px;width:120px;height:25px;background:#fff"></div>
<div class="t " style="left:294px;top:749px;width:60px;text-align:center"></div>
<div class="t gr" style="left:356px;top:749px;width:63px;text-align:center">2949</div>
<div class="ell" style="left:517px;top:750px"></div>
<div class="t " style="left:531px;top:749px">R2_14_<span class="j">日本での女性の社会進出</span></div>
<div class="d" style="left:852px;top:756px"></div><div class="d" style="left:857px;top:756px"></div>
<div class="d" style="left:953px;top:756px"></div><div class="d" style="left:958px;top:756px"></div>
<div class="i" style="left:1025px;top:748px"><svg width="16" height="16" viewBox="0 0 16 16"><path d="M8 8 L0.3 8 A7.7 7.7 0 0 1 13.83 2.97 Z" fill="#a8c9fd" stroke="#2f4fd0" stroke-width="1"/><path d="M8 8 L13.83 2.97 A7.7 7.7 0 0 1 11.31 14.95 Z" fill="#a6f7a0" stroke="#2ea02e" stroke-width="1"/><path d="M8 8 L11.31 14.95 A7.7 7.7 0 0 1 0.3 8 Z" fill="#feb0a8" stroke="#c83a3a" stroke-width="1"/><path d="M8 8 L13.83 2.97" stroke="#2f4fd0" stroke-width="1"/></svg></div>
<div class="d" style="left:1059px;top:755px"></div><div class="d" style="left:1064px;top:755px"></div>
<div class="d" style="left:1236px;top:756px"></div><div class="d" style="left:1241px;top:756px"></div>
<div class="d" style="left:1337px;top:756px"></div><div class="d" style="left:1342px;top:756px"></div>
<div class="i" style="left:1394px;top:748px"><svg width="16" height="16" viewBox="0 0 16 16"><path d="M1.8 8.6 Q1.4 0 6 0 Q10.2 0 9.8 5.6 L8.6 6.4 L3.6 6.6 L3.4 8.8 Z" fill="#a4541c"/><ellipse cx="6.1" cy="4.5" rx="2.7" ry="2.1" fill="#fcd9b0"/><path d="M3.4 3.2 Q6 1.2 8.8 3.4 Q8.6 1.2 6 1.1 Q3.6 1.2 3.4 3.2Z" fill="#a4541c"/><path d="M0.4 8.8 L3 6.5 L6.4 6.6 L6.8 11.6 L1.4 11.8 Z" fill="#ee74b0"/><path d="M3.6 7.4 L5.8 7.4 L6 9.6 L3.8 9.4Z" fill="#ff9ccc"/><path d="M0 8.6 L1.4 8.4 L1.6 10.8 L0.2 10.8Z" fill="#eea060"/><path d="M6.7 8.8 Q6.4 3.8 10.4 3.8 Q14.4 3.8 14.1 8.8 Z" fill="#9c521e"/><ellipse cx="10.4" cy="8.1" rx="3.1" ry="2.4" fill="#fcd6ad"/><path d="M7.3 6.8 Q10.4 4.6 13.5 6.8 Q13 4.6 10.4 4.5 Q7.8 4.6 7.3 6.8Z" fill="#9c521e"/><path d="M4.3 13 L5.6 10.8 L7.6 9.8 L13.2 9.8 L15.2 10.8 L16 13 L14 13.4 L13.8 16 L6.4 16 L6.2 13.4 Z" fill="#3c64cc"/><path d="M6.8 11 L8.2 10.4 L12.6 10.4 L14 11 L13.4 15.4 L7.2 15.4 Z" fill="#4aa2fa"/><path d="M8 11.6 H12.8 V13 H8Z" fill="#7cc8ff" opacity=".8"/><path d="M3.9 12.6 H5.6 V15 H3.9Z" fill="#f08a24"/><path d="M14.4 12.6 H16 V15 H14.4Z" fill="#f08a24"/></svg></div>
<div class="t " style="left:1423px;top:749px">0</div>
<div class="c" style="left:294px;top:770px;width:60px;height:25px;background:#f1f1f1"></div>
<div class="c" style="left:356px;top:770px;width:63px;height:25px;background:#f1f1f1"></div>
<div class="c" style="left:421px;top:770px;width:78px;height:25px;background:#f1f1f1"></div>
<div class="c" style="left:501px;top:770px;width:231px;height:25px;background:#f1f1f1"></div>
<div class="c" style="left:734px;top:770px;width:135px;height:25px;background:#bbde6e"></div>
<div class="c" style="left:871px;top:770px;width:99px;height:25px;background:#ddedc1"></div>
<div class="c" style="left:972px;top:770px;width:104px;height:25px;background:#f1f1f1"></div>
<div class="c" style="left:1078px;top:770px;width:175px;height:25px;background:#f1f1f1"></div>
<div class="c" style="left:1255px;top:770px;width:99px;height:25px;background:#f6d193"></div>
<div class="c" style="left:1356px;top:770px;width:120px;height:25px;background:#f1f1f1"></div>
<div class="t " style="left:294px;top:776px;width:60px;text-align:center"></div>
<div class="t gr" style="left:356px;top:776px;width:63px;text-align:center">2948</div>
<div class="ell" style="left:517px;top:777px"></div>
<div class="t " style="left:531px;top:776px">R2_15_<span class="j">日本の職業場所と環境</span></div>
<div class="d" style="left:852px;top:783px"></div><div class="d" style="left:857px;top:783px"></div>
<div class="d" style="left:953px;top:783px"></div><div class="d" style="left:958px;top:783px"></div>
<div class="i" style="left:1025px;top:775px"><svg width="16" height="16" viewBox="0 0 16 16"><path d="M8 8 L0.3 8 A7.7 7.7 0 0 1 13.83 2.97 Z" fill="#a8c9fd" stroke="#2f4fd0" stroke-width="1"/><path d="M8 8 L13.83 2.97 A7.7 7.7 0 0 1 11.31 14.95 Z" fill="#a6f7a0" stroke="#2ea02e" stroke-width="1"/><path d="M8 8 L11.31 14.95 A7.7 7.7 0 0 1 0.3 8 Z" fill="#feb0a8" stroke="#c83a3a" stroke-width="1"/><path d="M8 8 L13.83 2.97" stroke="#2f4fd0" stroke-width="1"/></svg></div>
<div class="d" style="left:1059px;top:782px"></div><div class="d" style="left:1064px;top:782px"></div>
<div class="d" style="left:1236px;top:783px"></div><div class="d" style="left:1241px;top:783px"></div>
<div class="d" style="left:1337px;top:783px"></div><div class="d" style="left:1342px;top:783px"></div>
<div class="i" style="left:1394px;top:775px"><svg width="16" height="16" viewBox="0 0 16 16"><path d="M1.8 8.6 Q1.4 0 6 0 Q10.2 0 9.8 5.6 L8.6 6.4 L3.6 6.6 L3.4 8.8 Z" fill="#a4541c"/><ellipse cx="6.1" cy="4.5" rx="2.7" ry="2.1" fill="#fcd9b0"/><path d="M3.4 3.2 Q6 1.2 8.8 3.4 Q8.6 1.2 6 1.1 Q3.6 1.2 3.4 3.2Z" fill="#a4541c"/><path d="M0.4 8.8 L3 6.5 L6.4 6.6 L6.8 11.6 L1.4 11.8 Z" fill="#ee74b0"/><path d="M3.6 7.4 L5.8 7.4 L6 9.6 L3.8 9.4Z" fill="#ff9ccc"/><path d="M0 8.6 L1.4 8.4 L1.6 10.8 L0.2 10.8Z" fill="#eea060"/><path d="M6.7 8.8 Q6.4 3.8 10.4 3.8 Q14.4 3.8 14.1 8.8 Z" fill="#9c521e"/><ellipse cx="10.4" cy="8.1" rx="3.1" ry="2.4" fill="#fcd6ad"/><path d="M7.3 6.8 Q10.4 4.6 13.5 6.8 Q13 4.6 10.4 4.5 Q7.8 4.6 7.3 6.8Z" fill="#9c521e"/><path d="M4.3 13 L5.6 10.8 L7.6 9.8 L13.2 9.8 L15.2 10.8 L16 13 L14 13.4 L13.8 16 L6.4 16 L6.2 13.4 Z" fill="#3c64cc"/><path d="M6.8 11 L8.2 10.4 L12.6 10.4 L14 11 L13.4 15.4 L7.2 15.4 Z" fill="#4aa2fa"/><path d="M8 11.6 H12.8 V13 H8Z" fill="#7cc8ff" opacity=".8"/><path d="M3.9 12.6 H5.6 V15 H3.9Z" fill="#f08a24"/><path d="M14.4 12.6 H16 V15 H14.4Z" fill="#f08a24"/></svg></div>
<div class="t " style="left:1423px;top:776px">0</div>
<svg class="abs" style="left:0;top:0;pointer-events:none" width="1426" height="779" viewBox="0 0 1426 779">
<g fill="#b00404" stroke="none">
<path d="M107.5 131.5 L90.6 154 L119.2 154 Z"/>
<path d="M553.5 89.7 L536.6 112.2 L565.2 112.2 Z"/>
<path d="M1339.5 247.5 L1311.5 255.5 L1328.4 274.2 Z"/>
</g>
<g fill="none" stroke="#b00404" stroke-width="4.5">
<path d="M111 142.3 Q121 139.2 141.2 145.8"/>
<path d="M557 100.5 Q567 97.4 587.2 104"/>
<path d="M1322 264 Q1306 271.5 1286.3 269.8"/>
</g>
</svg>
</body></html>
